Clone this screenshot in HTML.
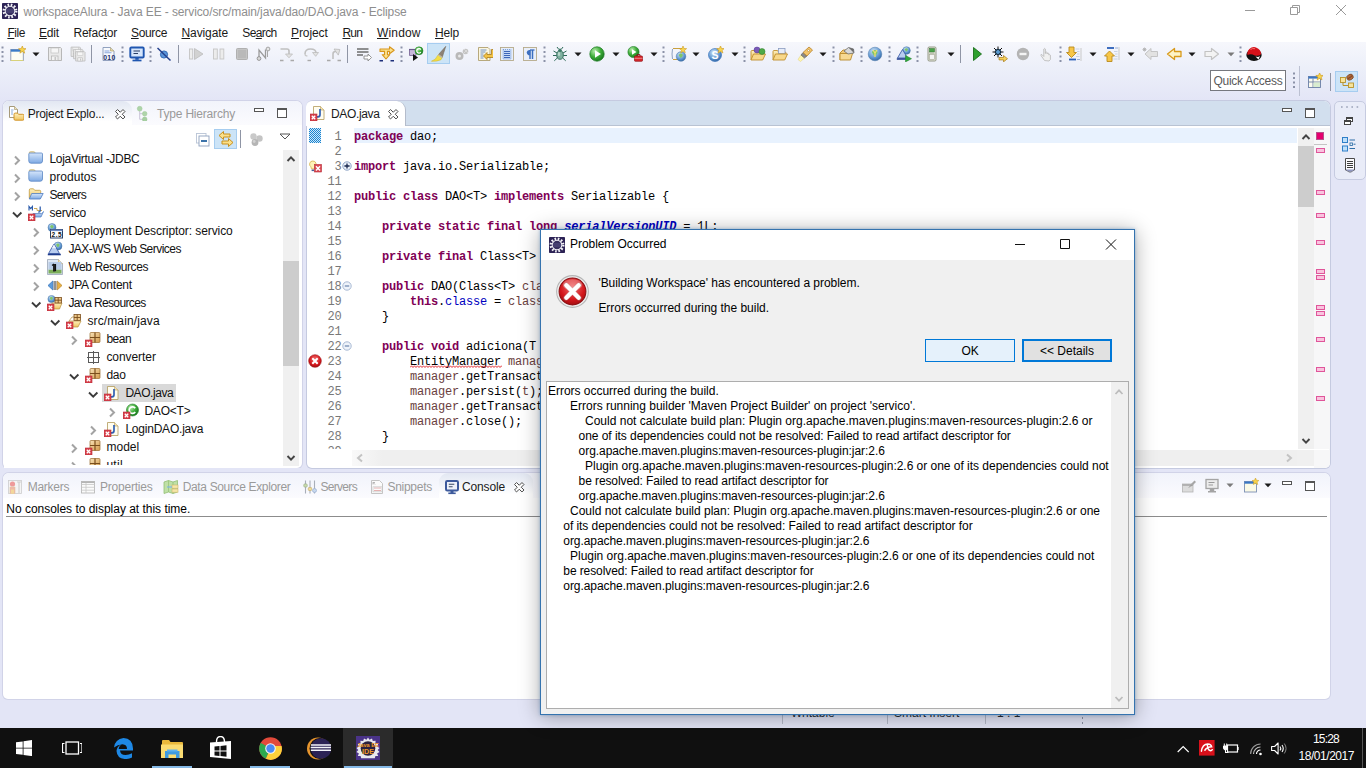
<!DOCTYPE html>
<html lang="en">
<head>
<meta charset="utf-8">
<title>workspaceAlura - Java EE - servico/src/main/java/dao/DAO.java - Eclipse</title>
<style>
html,body{margin:0;padding:0;}
body{width:1366px;height:768px;overflow:hidden;position:relative;background:#e3e5f6;font-family:"Liberation Sans",sans-serif;font-size:12px;}
#root{position:absolute;left:0;top:0;width:1366px;height:768px;overflow:hidden;}
#root div,#root span.t,#root svg{position:absolute;}
span.t{white-space:pre;}
u{text-decoration:underline;text-underline-offset:1px;}
.k{color:#7f0055;font-weight:bold;}
.f{color:#0000c0;}
.v{color:#6a3e3e;}
.sq{text-decoration:underline wavy #e02020;text-decoration-thickness:1px;text-underline-offset:2px;}
</style>
</head>
<body>
<div id="root">
<svg width="0" height="0" style="left:0;top:0"><defs>
<linearGradient id="gB" x1="0" y1="0" x2="0" y2="1"><stop offset="0" stop-color="#d6e6fb"/><stop offset="1" stop-color="#7ea9e3"/></linearGradient>
<linearGradient id="gY" x1="0" y1="0" x2="0" y2="1"><stop offset="0" stop-color="#fdf0c0"/><stop offset="1" stop-color="#f0c45e"/></linearGradient>
<linearGradient id="gP" x1="0" y1="0" x2="1" y2="1"><stop offset="0" stop-color="#f7e2b8"/><stop offset="1" stop-color="#d39a4a"/></linearGradient>
<radialGradient id="gG" cx=".35" cy=".3" r=".8"><stop offset="0" stop-color="#b8ecae"/><stop offset=".5" stop-color="#3fae3a"/><stop offset="1" stop-color="#14701a"/></radialGradient>
<radialGradient id="gE" cx=".4" cy=".3" r=".8"><stop offset="0" stop-color="#cfe4f8"/><stop offset=".6" stop-color="#5d95cf"/><stop offset="1" stop-color="#2a5a96"/></radialGradient>
<radialGradient id="gR" cx=".5" cy=".35" r=".75"><stop offset="0" stop-color="#f26d6d"/><stop offset=".6" stop-color="#d3161b"/><stop offset="1" stop-color="#8f0a0d"/></radialGradient>
<linearGradient id="gS" x1="0" y1="0" x2="0" y2="1"><stop offset="0" stop-color="#fff"/><stop offset="1" stop-color="#dcdcdc"/></linearGradient>
</defs></svg>
<div style="left:0px;top:0px;width:1366px;height:22px;background:#fff;"></div>
<div style="left:0px;top:22px;width:1366px;height:20px;background:#fff;"></div>
<div style="left:0px;top:42px;width:1366px;height:59px;background:linear-gradient(#f6f7fc 0%,#eceff9 45%,#e3e5f6 100%);"></div>
<div style="left:0px;top:698px;width:1366px;height:30px;background:#e3e5f6;"></div>
<span class="t" style='left:23.4px;top:3.90px;font-size:12px;line-height:16px;color:#8e8e8e;font-family:"Liberation Sans", sans-serif;letter-spacing:-0.107px;'>workspaceAlura - Java EE - servico/src/main/java/dao/DAO.java - Eclipse</span>
<span class="t" style='left:7.4px;top:24.50px;font-size:12px;line-height:16px;color:#1a1a1a;font-family:"Liberation Sans", sans-serif;letter-spacing:-0.440px;'><u>F</u>ile</span>
<span class="t" style='left:39px;top:24.50px;font-size:12px;line-height:16px;color:#1a1a1a;font-family:"Liberation Sans", sans-serif;letter-spacing:-0.176px;'><u>E</u>dit</span>
<span class="t" style='left:73.5px;top:24.50px;font-size:12px;line-height:16px;color:#1a1a1a;font-family:"Liberation Sans", sans-serif;letter-spacing:-0.234px;'>Refac<u>t</u>or</span>
<span class="t" style='left:131px;top:24.50px;font-size:12px;line-height:16px;color:#1a1a1a;font-family:"Liberation Sans", sans-serif;letter-spacing:-0.341px;'><u>S</u>ource</span>
<span class="t" style='left:181.5px;top:24.50px;font-size:12px;line-height:16px;color:#1a1a1a;font-family:"Liberation Sans", sans-serif;letter-spacing:-0.109px;'><u>N</u>avigate</span>
<span class="t" style='left:242.3px;top:24.50px;font-size:12px;line-height:16px;color:#1a1a1a;font-family:"Liberation Sans", sans-serif;letter-spacing:-0.624px;'>Se<u>a</u>rch</span>
<span class="t" style='left:291px;top:24.50px;font-size:12px;line-height:16px;color:#1a1a1a;font-family:"Liberation Sans", sans-serif;letter-spacing:-0.094px;'><u>P</u>roject</span>
<span class="t" style='left:342.5px;top:24.50px;font-size:12px;line-height:16px;color:#1a1a1a;font-family:"Liberation Sans", sans-serif;letter-spacing:-0.844px;'><u>R</u>un</span>
<span class="t" style='left:377px;top:24.50px;font-size:12px;line-height:16px;color:#1a1a1a;font-family:"Liberation Sans", sans-serif;letter-spacing:0.169px;'><u>W</u>indow</span>
<span class="t" style='left:435px;top:24.50px;font-size:12px;line-height:16px;color:#1a1a1a;font-family:"Liberation Sans", sans-serif;letter-spacing:-0.172px;'><u>H</u>elp</span>
<svg style="left:2px;top:2.5px;" width="16" height="16" viewBox="0 0 16 16"><rect x="0" y="0" width="16" height="16" rx=".8" fill="#2c2255"/><circle cx="8" cy="8" r="6.300" fill="none" stroke="#f4f4f8" stroke-width="2.300" stroke-dasharray="1.650 1.650"/><circle cx="8" cy="8" r="5.300" fill="#f4f4f8"/><circle cx="8" cy="8" r="4.300" fill="#37305f"/><path d="M4 6.800h8M3.800 8h8.400M4 9.200h8" stroke="#5d578c" stroke-width=".6"/></svg>
<svg style="left:1240px;top:0" width="126" height="22" viewBox="0 0 126 22"><path d="M5 10.500h10" stroke="#9a9a9a" stroke-width="1"/><path d="M50.500 7.500h7v7h-7zM52.500 7.500v-2h7v7h-2" fill="none" stroke="#9a9a9a" stroke-width="1"/><path d="M96 5l10 10M106 5l-10 10" stroke="#9a9a9a" stroke-width="1"/></svg>
<div style="left:427px;top:42.8px;width:23px;height:21.2px;background:#cce4f7;border:1px solid #a6cdf0;box-sizing:border-box;"></div>
<svg style="left:430.5px;top:46px;" width="16" height="16" viewBox="0 0 16 16"><path d="M14.800 .300l-7.300 8.200 3.800 2.700z" fill="#8d8274" stroke="#6e6256" stroke-width=".5"/><path d="M7.500 8.500l3.800 2.700-1.300 2.500q-4.500 2-9.500 1.500 4.500-1.500 5.500-4.700z" fill="#f3df45" stroke="#d6bb28" stroke-width=".6"/><path d="M7.300 8.800l4 2.800" stroke="#b9b4ac" stroke-width="1.400"/></svg>
<svg style="left:9.5px;top:46px;" width="16" height="16" viewBox="0 0 16 16"><rect x=".8" y="3.500" width="12.500" height="11" fill="#fdfdf4" stroke="#8a96b0" stroke-width=".9"/><path d="M.8 14.500h12.500" stroke="#d8d27a" stroke-width="1"/><path d="M.8 4.600h12.500" stroke="#3b7cc8" stroke-width="2.200"/><path transform="translate(12.3 3.6) scale(1.15)" d="M0-3.2l.9 2.300 2.400.100-1.900 1.500.700 2.400-2.100-1.400-2.100 1.400.700-2.400-1.900-1.500 2.400-.100z" fill="#f9d54e" stroke="#c8961c" stroke-width=".5"/></svg>
<svg style="left:27.5px;top:46px;" width="16" height="16" viewBox="0 0 16 16"><path d="M4.500 6.500h7l-3.500 3.800z" fill="#1a1a1a"/></svg>
<svg style="left:46.5px;top:46px;" width="16" height="16" viewBox="0 0 16 16"><g transform="translate(0 0) scale(1)"><path d="M1.500 1.500h12l1 1v12h-13z" fill="#e9e9e9" stroke="#b7b7b7" stroke-width="1"/><rect x="4" y="2" width="7.500" height="5" fill="#f6f6f6" stroke="#c2c2c2" stroke-width=".7"/><rect x="4.500" y="10" width="6.500" height="4.500" fill="#f3f3f3" stroke="#b7b7b7" stroke-width=".8"/><rect x="7.500" y="11" width="1.600" height="3" fill="#c6c6c6"/></g></svg>
<svg style="left:69.5px;top:46px;" width="16" height="16" viewBox="0 0 16 16"><g transform="translate(0 0) scale(0.72)"><path d="M1.500 1.500h12l1 1v12h-13z" fill="#e9e9e9" stroke="#b7b7b7" stroke-width="1"/><rect x="4" y="2" width="7.500" height="5" fill="#f6f6f6" stroke="#c2c2c2" stroke-width=".7"/><rect x="4.500" y="10" width="6.500" height="4.500" fill="#f3f3f3" stroke="#b7b7b7" stroke-width=".8"/><rect x="7.500" y="11" width="1.600" height="3" fill="#c6c6c6"/></g><g transform="translate(2.5 2.3) scale(0.72)"><path d="M1.500 1.500h12l1 1v12h-13z" fill="#e9e9e9" stroke="#b7b7b7" stroke-width="1"/><rect x="4" y="2" width="7.500" height="5" fill="#f6f6f6" stroke="#c2c2c2" stroke-width=".7"/><rect x="4.500" y="10" width="6.500" height="4.500" fill="#f3f3f3" stroke="#b7b7b7" stroke-width=".8"/><rect x="7.500" y="11" width="1.600" height="3" fill="#c6c6c6"/></g><g transform="translate(4.6 4.6) scale(0.72)"><path d="M1.500 1.500h12l1 1v12h-13z" fill="#e9e9e9" stroke="#b7b7b7" stroke-width="1"/><rect x="4" y="2" width="7.500" height="5" fill="#f6f6f6" stroke="#c2c2c2" stroke-width=".7"/><rect x="4.500" y="10" width="6.500" height="4.500" fill="#f3f3f3" stroke="#b7b7b7" stroke-width=".8"/><rect x="7.500" y="11" width="1.600" height="3" fill="#c6c6c6"/></g></svg>
<svg style="left:100.5px;top:46px;" width="16" height="16" viewBox="0 0 16 16"><path d="M2 1.500h7.500l3.500 3.500v9.500h-11z" fill="#f7f9fd" stroke="#8797b8" stroke-width=".9"/><path d="M9.500 1.500v3.500h3.500" fill="#e8d9a4" stroke="#a89a6a" stroke-width=".6"/><path d="M3.500 5h5M3.500 6.800h7" stroke="#8aa6dc" stroke-width="1.100"/><text x="2.200" y="13.600" font-family="Liberation Sans,sans-serif" font-weight="bold" font-size="6.800" fill="#1d2f6a" textLength="12">010</text></svg>
<svg style="left:128.5px;top:46px;" width="16" height="16" viewBox="0 0 16 16"><rect x="1.300" y="1.500" width="13.400" height="10" rx="1" fill="#d6e6fb" stroke="#1f56b0" stroke-width="1.900"/><path d="M4.500 5h6.500M4.500 7.500h4.500" stroke="#2a3f66" stroke-width="1.100"/><path d="M6.300 12h3.400v1.800h-3.400z" fill="#1f56b0"/><path d="M3.500 14.500h9" stroke="#1f56b0" stroke-width="1.700"/></svg>
<svg style="left:155.5px;top:46px;" width="16" height="16" viewBox="0 0 16 16"><circle cx="8" cy="8.500" r="3.600" fill="#5a95da" stroke="#2b62b0" stroke-width=".9"/><path d="M1.500 2l13 12.500" stroke="#25408c" stroke-width="1.500"/></svg>
<svg style="left:187.5px;top:46px;" width="16" height="16" viewBox="0 0 16 16"><rect x="1.500" y="3" width="3.200" height="10" fill="#eee" stroke="#c4c4c4" stroke-width=".9"/><path d="M6.500 2.500l8.500 5.500-8.500 5.500z" fill="#d2d2d2" stroke="#bdbdbd" stroke-width=".8"/></svg>
<svg style="left:210.5px;top:46px;" width="16" height="16" viewBox="0 0 16 16"><rect x="2.500" y="3" width="3.800" height="10" fill="#ececec" stroke="#c6c6c6" stroke-width=".9"/><rect x="9" y="3" width="3.800" height="10" fill="#ececec" stroke="#c6c6c6" stroke-width=".9"/></svg>
<svg style="left:233.5px;top:46px;" width="16" height="16" viewBox="0 0 16 16"><rect x="2.500" y="2.500" width="11" height="11" rx="1" fill="#c4c4c4" stroke="#b0b0b0" stroke-width="1"/><rect x="4" y="4" width="8" height="8" fill="#b9b9b9"/></svg>
<svg style="left:256px;top:46px;" width="16" height="16" viewBox="0 0 16 16"><path d="M3 12v-8l6.500 8v-8.500" fill="none" stroke="#9b9b9b" stroke-width="1.300"/><circle cx="3" cy="12.500" r="1.900" fill="#d9d9d9" stroke="#8f8f8f" stroke-width=".9"/><circle cx="12" cy="3" r="1.900" fill="#e5e5e5" stroke="#9d9d9d" stroke-width=".9"/><path d="M11.500 5v6" stroke="#a8a8a8" stroke-width="1"/></svg>
<svg style="left:279px;top:46px;" width="16" height="16" viewBox="0 0 16 16"><path d="M1.500 3h6.500q2 0 2 2v3" fill="none" stroke="#c0c0c0" stroke-width="1.600"/><path d="M6.500 8h7l-3.500 3.800z" fill="#e3e3e3" stroke="#bcbcbc" stroke-width=".8"/><path d="M1 14.500h3.500M11.500 14.500h3.500" stroke="#a9a9a9" stroke-width="1.400"/></svg>
<svg style="left:302.5px;top:46px;" width="16" height="16" viewBox="0 0 16 16"><path d="M2 8q0-5 5.500-5t5.500 4" fill="none" stroke="#c0c0c0" stroke-width="1.600"/><path d="M9.500 6.500h6l-2.800 3.800z" fill="#e3e3e3" stroke="#bcbcbc" stroke-width=".8"/><path d="M2 8q0 2 2.500 2" fill="none" stroke="#c8c8c8" stroke-width="1.200"/><path d="M4.500 14.500h3.500" stroke="#a9a9a9" stroke-width="1.400"/></svg>
<svg style="left:325.5px;top:46px;" width="16" height="16" viewBox="0 0 16 16"><path d="M7 13v-5q0-2.500 2.500-2.500h1" fill="none" stroke="#c0c0c0" stroke-width="1.600"/><path d="M10 1.800l4.500 3.700-4.500 3.700z" fill="#e3e3e3" stroke="#bcbcbc" stroke-width=".8" transform="rotate(-35 11 5.500)"/><path d="M1 14.500h3.500M11.500 14.500h3.500" stroke="#a9a9a9" stroke-width="1.400"/></svg>
<svg style="left:355.5px;top:46px;" width="16" height="16" viewBox="0 0 16 16"><path d="M1 3h11.500M1 6h11.500M1 9h6" stroke="#6e6e6e" stroke-width="1.500"/><path d="M8 10h4v-2l3.500 3.500-3.500 3.500v-2h-4z" fill="#fff" stroke="#8a8a8a" stroke-width=".9"/></svg>
<svg style="left:379px;top:46px;" width="16" height="16" viewBox="0 0 16 16"><path d="M1 3h9.500v-2.300l4.700 3.500-4.700 3.500v-2.300h-2v3.300h2.300l-3.800 4.300-3.800-4.300h2.300v-3.300h-4.500z" fill="#fbe08a" stroke="#d8961c" stroke-width="1.100" stroke-linejoin="round"/><path d="M.500 14.800h3.500M11.500 14.800h3.500" stroke="#1c2f7a" stroke-width="1.600"/></svg>
<svg style="left:408px;top:46px;" width="16" height="16" viewBox="0 0 16 16"><path d="M1.500 3.500h6.500v6h-6.500z" fill="#c8b8dc" stroke="#7d6a9a" stroke-width=".9"/><path d="M1 3.500h7.500" stroke="#6a5a8a" stroke-width="1.200"/><path d="M5 8v7l5-3.600z" fill="#111"/><circle cx="11" cy="4.800" r="4" fill="url(#gG)" stroke="#1d7a22" stroke-width=".5"/><path d="M12.800 3.600a2.200 2.200 0 1 0 0 2.500" fill="none" stroke="#fff" stroke-width="1.200"/></svg>
<svg style="left:453.5px;top:46px;" width="16" height="16" viewBox="0 0 16 16"><circle cx="5.500" cy="10" r="4" fill="#b9b9b9"/><circle cx="5.500" cy="10" r="1.500" fill="#e8e8e8"/><circle cx="11.500" cy="5.500" r="2.800" fill="#c4c4c4"/><path d="M10 3l4 4M14 3l-4 4" stroke="#d9d9d9" stroke-width="1"/></svg>
<svg style="left:476.5px;top:46px;" width="16" height="16" viewBox="0 0 16 16"><path d="M1.500 1.500h9.500l2 2v11h-11.500z" fill="#fbf6df" stroke="#b0a070" stroke-width=".9"/><path d="M3.500 4h6M3.500 6h5M3.500 8h3M3.500 10h3M3.500 12h3" stroke="#5f86c8" stroke-width=".9"/><path d="M14.500 3.500v5h-4.500v-2l-3.500 3.500 3.500 3.500v-2h7.500v-8z" fill="#f3c243" stroke="#a87b18" stroke-width=".8" stroke-linejoin="round"/></svg>
<svg style="left:499px;top:46px;" width="16" height="16" viewBox="0 0 16 16"><rect x="1.500" y="1.500" width="13" height="13" fill="#e6eefb" stroke="#b6aa8a" stroke-width=".9"/><rect x="4" y="3.500" width="8" height="9.500" fill="#c5d9f6" stroke="#5d86c8" stroke-width=".7" stroke-dasharray="1 1"/><path d="M5 5.500h6M5 7.500h6M5 9.500h6M5 11.500h6" stroke="#3d66b8" stroke-width="1"/></svg>
<svg style="left:522px;top:46px;" width="16" height="16" viewBox="0 0 16 16"><rect x="1.500" y="1.500" width="13" height="13" fill="#e9effa" stroke="#b6aa8a" stroke-width=".9"/><path d="M10.500 4v9M8 4v9" stroke="#3c6fc0" stroke-width="1.500"/><path d="M8 4h4.500" stroke="#3c6fc0" stroke-width="1.300"/><path d="M8.200 4a2.700 2.700 0 1 0 0 5.200z" fill="#3c6fc0"/></svg>
<svg style="left:551.5px;top:46px;" width="16" height="16" viewBox="0 0 16 16"><ellipse cx="8" cy="9" rx="3.300" ry="4.300" fill="#7fb0a0" stroke="#2e6a58" stroke-width=".9"/><circle cx="8" cy="4.300" r="1.700" fill="#3f7a68"/><path d="M5 7l-3.500-2M11 7l3.500-2M4.700 9.500h-3.700M11.300 9.500h3.700M5.300 12l-3 2.800M10.700 12l3 2.800M6.500 3l-1.500-2M9.500 3l1.500-2" stroke="#2e6a58" stroke-width="1"/><ellipse cx="7" cy="8" rx="1.200" ry="2" fill="#c5e2d6" opacity=".8"/></svg>
<svg style="left:569.5px;top:46px;" width="16" height="16" viewBox="0 0 16 16"><path d="M4.500 6.500h7l-3.500 3.800z" fill="#1a1a1a"/></svg>
<svg style="left:589px;top:46px;" width="16" height="16" viewBox="0 0 16 16"><circle cx="8" cy="8" r="7.200" fill="url(#gG)" stroke="#1b7a22" stroke-width=".7"/><path d="M6 4.200l6 3.800-6 3.800z" fill="#fff"/></svg>
<svg style="left:607.5px;top:46px;" width="16" height="16" viewBox="0 0 16 16"><path d="M4.500 6.500h7l-3.500 3.800z" fill="#1a1a1a"/></svg>
<svg style="left:627px;top:46px;" width="16" height="16" viewBox="0 0 16 16"><circle cx="6.500" cy="6" r="5.600" fill="url(#gG)" stroke="#1b7a22" stroke-width=".6"/><path d="M5 3.200l4.500 2.800-4.500 2.800z" fill="#fff"/><rect x="7.500" y="10" width="8" height="5.300" rx=".8" fill="#d8262c" stroke="#8f1216" stroke-width=".7"/><path d="M10 10v-1.300h3v1.300" fill="none" stroke="#8f1216" stroke-width="1"/><path d="M7.500 12.300h8" stroke="#f3a0a0" stroke-width=".8"/></svg>
<svg style="left:645.5px;top:46px;" width="16" height="16" viewBox="0 0 16 16"><path d="M4.500 6.500h7l-3.500 3.800z" fill="#1a1a1a"/></svg>
<svg style="left:671px;top:46px;" width="16" height="16" viewBox="0 0 16 16"><path d="M2 2.500h10M2 13.500h6" stroke="#c8a040" stroke-width="1.200"/><path d="M1.500 3q-1 5 0 10" fill="none" stroke="#8ea0c0" stroke-width="1"/><circle cx="10" cy="10.5" r="4.8" fill="url(#gE)" stroke="#4a78a8" stroke-width=".5"/><path d="M7.6 9.06q2.4 -2.88 4.32 0q-0.96 3.36 -2.88 2.4z" fill="#7fc66a"/><path transform="translate(12 3.5) scale(1.1)" d="M0-3.2l.9 2.300 2.400.100-1.900 1.500.700 2.400-2.100-1.400-2.100 1.400.700-2.400-1.900-1.500 2.400-.100z" fill="#f9d54e" stroke="#c8961c" stroke-width=".5"/></svg>
<svg style="left:688px;top:46px;" width="16" height="16" viewBox="0 0 16 16"><path d="M4.500 6.500h7l-3.500 3.800z" fill="#1a1a1a"/></svg>
<svg style="left:708px;top:46px;" width="16" height="16" viewBox="0 0 16 16"><circle cx="7" cy="9" r="6.500" fill="url(#gE)" stroke="#2a6ab8" stroke-width=".6"/><text x="3.600" y="13" font-family="Liberation Sans,sans-serif" font-weight="bold" font-size="10.500" fill="#fff">S</text><path transform="translate(12.5 3.5) scale(1.15)" d="M0-3.2l.9 2.300 2.400.100-1.900 1.500.700 2.400-2.100-1.400-2.100 1.400.700-2.400-1.900-1.500 2.400-.100z" fill="#f9d54e" stroke="#c8961c" stroke-width=".5"/></svg>
<svg style="left:726.5px;top:46px;" width="16" height="16" viewBox="0 0 16 16"><path d="M4.500 6.500h7l-3.500 3.800z" fill="#1a1a1a"/></svg>
<svg style="left:750px;top:46px;" width="16" height="16" viewBox="0 0 16 16"><path d="M1 14v-8.500q0-1 1-1h3.500l1 1.500h6.500q1 0 1 1v1" fill="url(#gY)" stroke="#c08f2c" stroke-width=".9"/><path d="M1 14l2.500-6h12l-2.800 6z" fill="#f8d88a" stroke="#c08f2c" stroke-width=".9"/><circle cx="7" cy="4" r="3" fill="#7a5ab8" stroke="#4e3590" stroke-width=".5"/><circle cx="12" cy="5.500" r="3" fill="#4faa48" stroke="#2a7a28" stroke-width=".5"/></svg>
<svg style="left:772px;top:46px;" width="16" height="16" viewBox="0 0 16 16"><path d="M1 14v-8.500q0-1 1-1h3.500l1 1.500h6.500q1 0 1 1v1" fill="url(#gY)" stroke="#c08f2c" stroke-width=".9"/><rect x="6.500" y="2.500" width="6.500" height="5" fill="#e6ecf8" stroke="#8a9cc0" stroke-width=".8"/><path d="M1 14l2.500-6h12l-2.800 6z" fill="#f8d88a" stroke="#c08f2c" stroke-width=".9"/></svg>
<svg style="left:797px;top:46px;" width="16" height="16" viewBox="0 0 16 16"><path d="M1 13.500l3-4.500 3.500 3-4 3.500z" fill="#fff5b0" stroke="#e0d070" stroke-width=".5"/><path d="M4 9l2-2.500 4 3.500-2.500 2z" fill="#8a8a8a" stroke="#5a5a5a" stroke-width=".6"/><path d="M6 6.500l6-5.500 3.500 3-5.500 6z" fill="#f3c46a" stroke="#b8832a" stroke-width=".8"/><circle cx="11.500" cy="4.500" r="1" fill="#fff" stroke="#a87820" stroke-width=".5"/></svg>
<svg style="left:815.3px;top:46px;" width="16" height="16" viewBox="0 0 16 16"><path d="M4.500 6.500h7l-3.500 3.800z" fill="#1a1a1a"/></svg>
<svg style="left:838.5px;top:46px;" width="16" height="16" viewBox="0 0 16 16"><path d="M1 14v-7l3-3h6l-2 3.500" fill="#f1c978" stroke="#b98a2a" stroke-width=".9"/><path d="M1 14v-6.500h7.500l5.500-1.500-2.500 8z" fill="#f7d992" stroke="#b98a2a" stroke-width=".9"/><path d="M5 5l4.500-3.500 5 1.500 .500 4-6 1z" fill="#d9d9d9" stroke="#6e6e6e" stroke-width=".8"/><path d="M9.500 1.500l5 1.500.5 4z" fill="#6a6a6a"/></svg>
<svg style="left:867.3px;top:46px;" width="16" height="16" viewBox="0 0 16 16"><circle cx="8" cy="8" r="6.8" fill="url(#gE)" stroke="#4a78a8" stroke-width=".5"/><path d="M4.6 5.96q3.4 -4.08 6.12 0q-1.36 4.76 -4.08 3.4z" fill="#7fc66a"/><path d="M6 4l2 3 2-3M8 7v4" stroke="#f2e070" stroke-width="1.200" fill="none"/></svg>
<svg style="left:895.5px;top:46px;" width="16" height="16" viewBox="0 0 16 16"><circle cx="10.5" cy="4.5" r="3.8" fill="url(#gE)" stroke="#4a78a8" stroke-width=".5"/><path d="M8.6 3.3600000000000003q1.9 -2.28 3.42 0q-0.76 2.6599999999999997 -2.28 1.9z" fill="#7fc66a"/><path d="M6.500 3.500l5 8.500h-10z" fill="#b8cdf0" stroke="#3050a0" stroke-width=".8"/><path d="M.8 13h9" stroke="#1c3a8c" stroke-width="1.500"/><path d="M9.500 9.500l6 3.200-6 3.200z" fill="#2fa83a" stroke="#167a22" stroke-width=".5"/></svg>
<svg style="left:923.8px;top:46px;" width="16" height="16" viewBox="0 0 16 16"><rect x="4" y="1" width="8" height="14" rx="1.200" fill="#e6e8dc" stroke="#8a8f7a" stroke-width=".9"/><rect x="5.500" y="2.500" width="5" height="3.500" fill="#4aa24a" stroke="#2e6e2e" stroke-width=".5"/><rect x="5.500" y="8.500" width="5" height="5" fill="#f4f4f4" stroke="#a0a490" stroke-width=".6"/><path d="M5.500 7.200h5" stroke="#a0a490" stroke-width=".8"/></svg>
<svg style="left:942.5px;top:46px;" width="16" height="16" viewBox="0 0 16 16"><path d="M4.500 6.500h7l-3.500 3.800z" fill="#1a1a1a"/></svg>
<svg style="left:969px;top:46px;" width="16" height="16" viewBox="0 0 16 16"><path d="M4.500 1.500l8 6.500-8 6.500z" fill="#2fa02f" stroke="#1a6e1a" stroke-width=".9" stroke-linejoin="round"/></svg>
<svg style="left:992px;top:46px;" width="16" height="16" viewBox="0 0 16 16"><circle cx="6" cy="6" r="2.800" fill="#3a7ab0" stroke="#123a5a" stroke-width=".9"/><path d="M6 .5v11M.5 6h11M2 2l8 8M10 2l-8 8" stroke="#111" stroke-width="1"/><circle cx="6" cy="6" r="2" fill="#5a9ad0"/><path d="M7 11.500h4.500v-2l4 3.200-4 3.200v-2h-4.500z" fill="#f5cf5a" stroke="#a87b18" stroke-width=".7" stroke-linejoin="round"/></svg>
<svg style="left:1015px;top:46px;" width="16" height="16" viewBox="0 0 16 16"><circle cx="8" cy="8" r="6.200" fill="#b4b4b4"/><rect x="4.500" y="6.800" width="7" height="2.400" fill="#f4f4f4"/></svg>
<svg style="left:1038.5px;top:46px;" width="16" height="16" viewBox="0 0 16 16"><path d="M5.500 14.500l-3.500-5q-.500-1.200.800-1l2 2v-7.500q.800-1.200 1.600 0v4.500-1q.900-1 1.700 0v1.500-.500q.900-1 1.700 0v1.500q.900-.800 1.600.200v4.300l-1.400 1.500z" fill="#f0f0f0" stroke="#bcbcbc" stroke-width=".9" stroke-linejoin="round"/></svg>
<svg style="left:1066px;top:46px;" width="16" height="16" viewBox="0 0 16 16"><path d="M3 1h5v5.500h2.500l-5 5-5-5h2.500z" fill="#f7c648" stroke="#b98a1e" stroke-width=".9" stroke-linejoin="round"/><path d="M15 2v13" stroke="#c9c9c9" stroke-width="1"/><path d="M9.500 3h4M11 5.500h2.500M11 8h2.500M10 10.500h3.500" stroke="#c5cfe2" stroke-width=".9"/><path d="M3 13.500h7" stroke="#2b5fb8" stroke-width="1.800"/><path d="M11 13.500h3" stroke="#9ab0d8" stroke-width="1"/></svg>
<svg style="left:1085px;top:46px;" width="16" height="16" viewBox="0 0 16 16"><path d="M4.500 6.500h7l-3.500 3.800z" fill="#1a1a1a"/></svg>
<svg style="left:1104px;top:46px;" width="16" height="16" viewBox="0 0 16 16"><path d="M3 15.500h5v-5.500h2.500l-5-5-5 5h2.500z" fill="#f7c648" stroke="#b98a1e" stroke-width=".9" stroke-linejoin="round"/><path d="M15 1v13" stroke="#c9c9c9" stroke-width="1"/><path d="M10 5.500h3.500M11 8h2.500M11 10.500h2.500M9.500 13h4" stroke="#c5cfe2" stroke-width=".9"/><path d="M3 2h7" stroke="#2b5fb8" stroke-width="1.800"/><path d="M11 2h3" stroke="#9ab0d8" stroke-width="1"/></svg>
<svg style="left:1123.3px;top:46px;" width="16" height="16" viewBox="0 0 16 16"><path d="M4.500 6.500h7l-3.500 3.800z" fill="#1a1a1a"/></svg>
<svg style="left:1142px;top:46px;" width="16" height="16" viewBox="0 0 16 16"><path d="M15.500 5.500v5h-6.500v3l-6-5.500 6-5.500v3z" fill="#e2e2e2" stroke="#c0c0c0" stroke-width=".9" stroke-linejoin="round"/><path d="M1 2l3 3M4 2l-3 3M2.500 1.500v4M.5 3.500h4" stroke="#b0b0b0" stroke-width=".8"/></svg>
<svg style="left:1166px;top:46px;" width="16" height="16" viewBox="0 0 16 16"><path d="M15 5.500v5h-6.500v3l-7-5.500 7-5.500v3z" fill="#fdf3c6" stroke="#d89a1a" stroke-width="1.300" stroke-linejoin="round"/></svg>
<svg style="left:1184.3px;top:46px;" width="16" height="16" viewBox="0 0 16 16"><path d="M4.500 6.500h7l-3.500 3.800z" fill="#1a1a1a"/></svg>
<svg style="left:1204px;top:46px;" width="16" height="16" viewBox="0 0 16 16"><path d="M1 5.500v5h6.500v3l7-5.500-7-5.500v3z" fill="#f3f3f3" stroke="#c3c3c3" stroke-width="1.200" stroke-linejoin="round"/></svg>
<svg style="left:1222.5px;top:46px;" width="16" height="16" viewBox="0 0 16 16"><path d="M4.500 6.500h7l-3.500 3.800z" fill="#7a7a7a"/></svg>
<svg style="left:1245.5px;top:46px;" width="16" height="16" viewBox="0 0 16 16"><ellipse cx="8" cy="9" rx="7.700" ry="6" fill="#111"/><path d="M1.500 9q-1-5 4-7.500 3-1 5 .3 4 1.400 4.700 6.200-2.500 2.800-6.500 1.400-3.800-2-7.200-.4z" fill="#d5121a"/><path d="M4.500 3.500q2-1.500 4.500-.8" stroke="#f26d6d" stroke-width="1" fill="none"/><path d="M9.500 10.500q2.500 1.200 4.500-.5l-1.500 3.500z" fill="#fff"/></svg>
<svg style="left:0px;top:45px;" width="17" height="17" viewBox="0 0 16 17"><path d="M2 1.500v15.500" stroke="#8b92a8" stroke-width="2" stroke-dasharray="2 2.500"/></svg>
<svg style="left:120px;top:45px;" width="17" height="17" viewBox="0 0 16 17"><path d="M2 1.500v15.500" stroke="#8b92a8" stroke-width="2" stroke-dasharray="2 2.500"/></svg>
<svg style="left:148px;top:45px;" width="17" height="17" viewBox="0 0 16 17"><path d="M2 1.500v15.500" stroke="#8b92a8" stroke-width="2" stroke-dasharray="2 2.500"/></svg>
<svg style="left:399.2px;top:45px;" width="17" height="17" viewBox="0 0 16 17"><path d="M2 1.500v15.500" stroke="#8b92a8" stroke-width="2" stroke-dasharray="2 2.500"/></svg>
<svg style="left:542px;top:45px;" width="17" height="17" viewBox="0 0 16 17"><path d="M2 1.500v15.500" stroke="#8b92a8" stroke-width="2" stroke-dasharray="2 2.500"/></svg>
<svg style="left:661px;top:45px;" width="17" height="17" viewBox="0 0 16 17"><path d="M2 1.500v15.500" stroke="#8b92a8" stroke-width="2" stroke-dasharray="2 2.500"/></svg>
<svg style="left:742px;top:45px;" width="17" height="17" viewBox="0 0 16 17"><path d="M2 1.500v15.500" stroke="#8b92a8" stroke-width="2" stroke-dasharray="2 2.500"/></svg>
<svg style="left:830.8px;top:45px;" width="17" height="17" viewBox="0 0 16 17"><path d="M2 1.500v15.500" stroke="#8b92a8" stroke-width="2" stroke-dasharray="2 2.500"/></svg>
<svg style="left:859px;top:45px;" width="17" height="17" viewBox="0 0 16 17"><path d="M2 1.500v15.500" stroke="#8b92a8" stroke-width="2" stroke-dasharray="2 2.500"/></svg>
<svg style="left:887px;top:45px;" width="17" height="17" viewBox="0 0 16 17"><path d="M2 1.500v15.500" stroke="#8b92a8" stroke-width="2" stroke-dasharray="2 2.500"/></svg>
<svg style="left:914.5px;top:45px;" width="17" height="17" viewBox="0 0 16 17"><path d="M2 1.500v15.500" stroke="#8b92a8" stroke-width="2" stroke-dasharray="2 2.500"/></svg>
<svg style="left:1058px;top:45px;" width="17" height="17" viewBox="0 0 16 17"><path d="M2 1.500v15.500" stroke="#8b92a8" stroke-width="2" stroke-dasharray="2 2.500"/></svg>
<svg style="left:1238px;top:45px;" width="17" height="17" viewBox="0 0 16 17"><path d="M2 1.500v15.500" stroke="#8b92a8" stroke-width="2" stroke-dasharray="2 2.500"/></svg>
<div style="left:91px;top:45px;width:1px;height:18px;background:#8f95a5;"></div>
<div style="left:178px;top:45px;width:1px;height:18px;background:#8f95a5;"></div>
<div style="left:347px;top:45px;width:1px;height:18px;background:#8f95a5;"></div>
<div style="left:960px;top:45px;width:1px;height:18px;background:#8f95a5;"></div>
<div style="left:1210px;top:70px;width:76px;height:21px;background:#fff;border:1px solid #76787e;box-sizing:border-box;"></div>
<span class="t" style='left:1213.4px;top:72.50px;font-size:12px;line-height:16px;color:#5a5a5a;font-family:"Liberation Sans", sans-serif;letter-spacing:-0.244px;'>Quick Access</span>
<svg style="left:1291.3px;top:70.5px;" width="18" height="18" viewBox="0 0 16 18"><path d="M2 1.500v15.500" stroke="#8b92a8" stroke-width="2" stroke-dasharray="2 2.500"/></svg>
<div style="left:1298.5px;top:66px;width:1px;height:30px;background:#bcc1d2;"></div>
<svg style="left:1307px;top:73px;" width="16" height="16" viewBox="0 0 16 16"><rect x="1.500" y="3.500" width="12" height="11" fill="#fbfbf0" stroke="#6b7fa6" stroke-width=".9"/><path d="M1.500 4.600h12" stroke="#3a76c4" stroke-width="2"/><path d="M1.500 9h12M6 5.500v9" stroke="#6b7fa6" stroke-width=".9"/><rect x="6.500" y="9.500" width="6.500" height="4.500" fill="#d8ecd0"/><path transform="translate(12.6 3.4) scale(1.15)" d="M0-3.2l.9 2.300 2.400.100-1.900 1.500.700 2.400-2.100-1.400-2.100 1.400.700-2.400-1.900-1.500 2.400-.100z" fill="#f9d54e" stroke="#c8961c" stroke-width=".5"/></svg>
<div style="left:1329.5px;top:73px;width:1px;height:18px;background:#8f95a5;"></div>
<div style="left:1335px;top:71px;width:22.5px;height:20.5px;background:#cce4f7;border:1px solid #a6cdf0;box-sizing:border-box;"></div>
<svg style="left:1339px;top:73px;" width="16" height="16" viewBox="0 0 16 16"><rect x="1.500" y="4.500" width="5" height="5" fill="#f6e39a" stroke="#b8922a" stroke-width=".9"/><rect x="9.500" y="10" width="5" height="4.500" fill="#f6e39a" stroke="#b8922a" stroke-width=".9"/><path d="M4 9.500v3h5.500" fill="none" stroke="#b8922a" stroke-width="1"/><ellipse cx="11" cy="4.200" rx="3.400" ry="2.800" fill="#b0683a" stroke="#6a3a1c" stroke-width=".6" transform="rotate(-30 11 4.200)"/><path d="M9 5.500q2-.5 4-2.800" stroke="#5a2e14" stroke-width=".7" fill="none"/></svg>
<div style="left:3px;top:101px;width:299px;height:367px;background:#fff;border-radius:6px 6px 5px 5px;box-shadow:0 0 0 1px rgba(160,166,196,.28);"></div>
<div style="left:3px;top:101px;width:299px;height:24px;background:linear-gradient(#f2f4fb,#fbfbfe);border-radius:6px 6px 0 0;"></div>
<div style="left:3px;top:101px;width:129px;height:24px;background:linear-gradient(#e2e7f2,#fff 85%);border-radius:6px 9px 0 0;"></div>
<span class="t" style='left:27.7px;top:105.80px;font-size:12px;line-height:16px;color:#1a1a1a;font-family:"Liberation Sans", sans-serif;letter-spacing:-0.250px;'>Project Explo...</span>
<svg style="left:8px;top:105px;" width="16" height="16" viewBox="0 0 16 16"><path d="M1.500 1.500h5l3 3v8h-8z" fill="#fff" stroke="#9c8f6a" stroke-width=".9"/><path d="M6.500 1.500v3h3" fill="#efe3b8" stroke="#9c8f6a" stroke-width=".6"/><path d="M3 5h2.500M3 7h2M3 9h2" stroke="#7aa0d8" stroke-width=".9"/><path d="M6 9.300q0-1.200 1.200-1.200h2.300l1 1.200h4.300q1.200 0 1.200 1.200v3.500q0 1.200-1.200 1.200h-7.600q-1.200 0-1.200-1.200z" fill="url(#gY)" stroke="#d2952a" stroke-width="1"/></svg>
<svg style="left:112.85px;top:106.75px;" width="14.5" height="14.5" viewBox="0 0 16 16"><path d="M2.800 5L5 2.800 8 5.800 11 2.800 13.200 5 10.200 8 13.200 11 11 13.200 8 10.200 5 13.200 2.800 11 5.800 8Z" fill="#fff" stroke="#4a4a4a" stroke-width="1.100" stroke-linejoin="round"/></svg>
<svg style="left:135px;top:105px;" width="16" height="16" viewBox="0 0 16 16"><path d="M4.700 5v9.300h3M4.700 8.700h3" fill="none" stroke="#c9c4d8" stroke-width="1"/><circle cx="4.700" cy="3.700" r="2.400" fill="#aed4a9" stroke="#9ac795" stroke-width=".5"/><circle cx="9.700" cy="8.700" r="2.300" fill="#aed4a9" stroke="#9ac795" stroke-width=".5"/><circle cx="9.700" cy="14.300" r="2.300" fill="#a6cfa1" stroke="#93c08f" stroke-width=".5"/></svg>
<svg style="left:251px;top:104px;" width="16" height="16" viewBox="0 0 16 16"><rect x="3.500" y="4.500" width="9" height="3" fill="#fff" stroke="#555" stroke-width="1"/></svg>
<svg style="left:274px;top:104px;" width="16" height="16" viewBox="0 0 16 16"><rect x="3.500" y="4.500" width="9" height="9" fill="#fff" stroke="#555" stroke-width="1"/><path d="M3.500 5.500h9" stroke="#555" stroke-width="1"/></svg>
<span class="t" style='left:157px;top:105.80px;font-size:12px;line-height:16px;color:#9a9a9a;font-family:"Liberation Sans", sans-serif;letter-spacing:-0.193px;'>Type Hierarchy</span>
<div style="left:283px;top:150px;width:16px;height:316px;background:#f0f0f0;"></div>
<div style="left:283px;top:261px;width:16px;height:105px;background:#cdcdcd;"></div>
<div style="left:214px;top:128.5px;width:23px;height:20.5px;background:#cce4f7;border:1px solid #a6cdf0;box-sizing:border-box;"></div>
<svg style="left:195.5px;top:131.5px;" width="16" height="16" viewBox="0 0 16 16"><rect x=".5" y="1.5" width="9.5" height="9.5" fill="#fff" stroke="#b9c4d6" stroke-width=".9"/><rect x="3" y="4" width="10" height="10" fill="#fff" stroke="#8ea0bd" stroke-width=".9"/><path d="M5 9h6" stroke="#1b5b9b" stroke-width="1.7"/></svg>
<svg style="left:218px;top:131px;" width="16" height="16" viewBox="0 0 16 16"><path d="M1 4.500l4.500-4v2.500h6.500v3h-6.500v2.500z" fill="#fbe08a" stroke="#c8901c" stroke-width="1" stroke-linejoin="round"/><path d="M15 11.500l-4.500-4v2.500h-6.500v3h6.500v2.500z" fill="#fbe08a" stroke="#c8901c" stroke-width="1" stroke-linejoin="round"/></svg>
<div style="left:239.5px;top:130px;width:1px;height:18px;background:#8f95a5;"></div>
<svg style="left:249px;top:131.5px;" width="16" height="16" viewBox="0 0 16 16"><circle cx="4.5" cy="4.5" r="3.2" fill="#c9c9c9"/><circle cx="10.5" cy="6.5" r="3.2" fill="#c4c4c4"/><circle cx="6" cy="10.5" r="3.4" fill="#b5b5b5"/><circle cx="5.2" cy="9.5" r="1.4" fill="#d2d2d2"/></svg>
<svg style="left:277px;top:129px;" width="16" height="16" viewBox="0 0 16 16"><path d="M3 5h10l-5 5z" fill="#fff" stroke="#555" stroke-width="1" stroke-linejoin="round"/></svg>
<svg style="left:283px;top:151px;" width="16" height="16" viewBox="0 0 16 16"><path d="M4.5 10l3.5-3.7 3.5 3.7" fill="none" stroke="#444" stroke-width="1.9"/></svg>
<svg style="left:283px;top:449.5px;" width="16" height="16" viewBox="0 0 16 16"><path d="M4.5 6l3.5 3.7 3.5-3.7" fill="none" stroke="#444" stroke-width="1.9"/></svg>
<div style="left:102px;top:384px;width:74px;height:18px;background:#d9d9d9;"></div>
<span class="t" style='left:49.4px;top:151.00px;font-size:12px;line-height:16px;color:#111;font-family:"Liberation Sans", sans-serif;letter-spacing:-0.297px;'>LojaVirtual -JDBC</span>
<svg style="left:28px;top:151px;" width="16" height="16" viewBox="0 0 16 16"><path d="M1.200 2q0-1.500 1.500-1.500h3q1 0 1.500 1.500z" fill="#f7ebc0" stroke="#cdb26a" stroke-width=".6"/><path d="M.800 3q0-1 1-1h11.700q1 0 1 1v7q0 2.200-2.200 2.200h-9.300q-2.200 0-2.200-2.200z" fill="url(#gB)" stroke="#5b86c4" stroke-width=".8"/></svg>
<svg style="left:8.5px;top:151.5px;" width="16" height="16" viewBox="0 0 16 16"><path d="M6 4.500l4 4-4 4" fill="none" stroke="#a3a3a3" stroke-width="2"/></svg>
<span class="t" style='left:49.4px;top:169.00px;font-size:12px;line-height:16px;color:#111;font-family:"Liberation Sans", sans-serif;letter-spacing:0.075px;'>produtos</span>
<svg style="left:28px;top:169px;" width="16" height="16" viewBox="0 0 16 16"><path d="M1.200 2q0-1.500 1.500-1.500h3q1 0 1.500 1.500z" fill="#f7ebc0" stroke="#cdb26a" stroke-width=".6"/><path d="M.800 3q0-1 1-1h11.700q1 0 1 1v7q0 2.200-2.200 2.200h-9.300q-2.200 0-2.200-2.200z" fill="url(#gB)" stroke="#5b86c4" stroke-width=".8"/></svg>
<svg style="left:8.5px;top:169.5px;" width="16" height="16" viewBox="0 0 16 16"><path d="M6 4.500l4 4-4 4" fill="none" stroke="#a3a3a3" stroke-width="2"/></svg>
<span class="t" style='left:49.4px;top:187.00px;font-size:12px;line-height:16px;color:#111;font-family:"Liberation Sans", sans-serif;letter-spacing:-0.678px;'>Servers</span>
<svg style="left:28px;top:187px;" width="16" height="16" viewBox="0 0 16 16"><path d="M1.300 11.500v-8.500q0-1.200 1.200-1.200h3l1.200 1.500h5q1 0 1 1v2" fill="url(#gY)" stroke="#c29a3c" stroke-width=".8"/><path d="M1.300 12l2.400-5.500h11.500l-2.900 5.500z" fill="url(#gB)" stroke="#4f7cc0" stroke-width=".8"/></svg>
<svg style="left:8.5px;top:187.5px;" width="16" height="16" viewBox="0 0 16 16"><path d="M6 4.500l4 4-4 4" fill="none" stroke="#a3a3a3" stroke-width="2"/></svg>
<span class="t" style='left:49.4px;top:205.00px;font-size:12px;line-height:16px;color:#111;font-family:"Liberation Sans", sans-serif;letter-spacing:-0.202px;'>servico</span>
<svg style="left:28px;top:205px;" width="16" height="16" viewBox="0 0 16 16"><path d="M5 8.5h8.5q1.5-.5 2-2l-2.5 5.5h-9z" fill="url(#gB)" stroke="#4f7cc0" stroke-width=".7"/><path d="M6 3.5h3v2h5" fill="none" stroke="#c9a85a" stroke-width="1"/><path d="M12.2 1.5v4.2q0 1.3-1.3 1.3h-.6" fill="none" stroke="#3060b0" stroke-width="1.3"/><path d="M1 5.5v-4l1.7 2.2 1.7-2.2v4" fill="none" stroke="#2456a8" stroke-width="1.1"/><rect x="0" y="9" width="7" height="7" fill="#d9434e" stroke="#b52a36" stroke-width=".6"/><path d="M1.8 10.8l3.4 3.4M5.2 10.8l-3.4 3.4" stroke="#fff" stroke-width="1.3"/></svg>
<svg style="left:8.5px;top:205.5px;" width="16" height="16" viewBox="0 0 16 16"><path d="M4 6.500l4.200 4.200 4.200-4.200" fill="none" stroke="#3c3c3c" stroke-width="1.900"/></svg>
<span class="t" style='left:68.4px;top:223.00px;font-size:12px;line-height:16px;color:#111;font-family:"Liberation Sans", sans-serif;letter-spacing:-0.081px;'>Deployment Descriptor: servico</span>
<svg style="left:47px;top:223px;" width="16" height="16" viewBox="0 0 16 16"><circle cx="5" cy="4.5" r="4" fill="url(#gE)" stroke="#4a78a8" stroke-width=".5"/><path d="M3.0 3.3q2.0 -2.4 3.6 0q-0.8 2.8 -2.4 2.0z" fill="#7fc66a"/><rect x="3.5" y="6.5" width="12" height="8.5" fill="#fff" stroke="#2b3f66" stroke-width="1"/><rect x="3.5" y="6.5" width="12" height="1.6" fill="#6b87c0"/><text x="4.6" y="14" font-family="Liberation Sans,sans-serif" font-size="6.5" font-weight="bold" fill="#111" textLength="10">2.5</text></svg>
<svg style="left:27.5px;top:223.5px;" width="16" height="16" viewBox="0 0 16 16"><path d="M6 4.500l4 4-4 4" fill="none" stroke="#a3a3a3" stroke-width="2"/></svg>
<span class="t" style='left:68.4px;top:241.00px;font-size:12px;line-height:16px;color:#111;font-family:"Liberation Sans", sans-serif;letter-spacing:-0.520px;'>JAX-WS Web Services</span>
<svg style="left:47px;top:241px;" width="16" height="16" viewBox="0 0 16 16"><circle cx="11" cy="5" r="4" fill="url(#gE)" stroke="#4a78a8" stroke-width=".5"/><path d="M9.0 3.8q2.0 -2.4 3.6 0q-0.8 2.8 -2.4 2.0z" fill="#7fc66a"/><path d="M7 3l5.5 9.5h-11z" fill="#b8cdf0" stroke="#3050a0" stroke-width=".8"/><path d="M0.8 13.5h13" stroke="#1c3a8c" stroke-width="1.6"/><path d="M7 3.2l-2.2 4h4.4z" fill="#fff" opacity=".8"/></svg>
<svg style="left:27.5px;top:241.5px;" width="16" height="16" viewBox="0 0 16 16"><path d="M6 4.500l4 4-4 4" fill="none" stroke="#a3a3a3" stroke-width="2"/></svg>
<span class="t" style='left:68.4px;top:259.00px;font-size:12px;line-height:16px;color:#111;font-family:"Liberation Sans", sans-serif;letter-spacing:-0.427px;'>Web Resources</span>
<svg style="left:47px;top:259px;" width="16" height="16" viewBox="0 0 16 16"><path d="M.5 .5h11l4 4v11h-15z" fill="#dfe8f4" stroke="#9aa6b8" stroke-width=".8"/><path d="M11.5 .5v4h4" fill="#f6e2b0" stroke="#c9a85a" stroke-width=".6"/><rect x="1.5" y="10.5" width="13" height="4" fill="#7cae5a"/><rect x="1.5" y="3" width="13" height="7.5" fill="#b9cce6"/><path d="M6 5h2.5v7.5h-2.5z" fill="#222"/><path d="M5 6.5l2-1.5M8.5 5v7" stroke="#111" stroke-width="1.2"/></svg>
<svg style="left:27.5px;top:259.5px;" width="16" height="16" viewBox="0 0 16 16"><path d="M6 4.500l4 4-4 4" fill="none" stroke="#a3a3a3" stroke-width="2"/></svg>
<span class="t" style='left:68.4px;top:277.00px;font-size:12px;line-height:16px;color:#111;font-family:"Liberation Sans", sans-serif;letter-spacing:-0.203px;'>JPA Content</span>
<svg style="left:47px;top:277px;" width="16" height="16" viewBox="0 0 16 16"><path d="M1 8.500l4.800-4.500v9z" fill="#5c9bdc" stroke="#2f6fb8" stroke-width=".7"/><path d="M15 8.500l-4.800-4.500v9z" fill="#e9b043" stroke="#b8842a" stroke-width=".7"/><path d="M7.200 4v9M8.800 4v9" stroke="#3a3a3a" stroke-width=".8"/></svg>
<svg style="left:27.5px;top:277.5px;" width="16" height="16" viewBox="0 0 16 16"><path d="M6 4.500l4 4-4 4" fill="none" stroke="#a3a3a3" stroke-width="2"/></svg>
<span class="t" style='left:68.4px;top:295.00px;font-size:12px;line-height:16px;color:#111;font-family:"Liberation Sans", sans-serif;letter-spacing:-0.632px;'>Java Resources</span>
<svg style="left:47px;top:295px;" width="16" height="16" viewBox="0 0 16 16"><circle cx="4.5" cy="4" r="3.6" fill="url(#gE)" stroke="#4a78a8" stroke-width=".5"/><path d="M2.7 2.92q1.8 -2.16 3.24 0q-0.7200000000000001 2.52 -2.16 1.8z" fill="#7fc66a"/><path d="M5 8h10l-2.5 6h-8z" fill="url(#gY)" stroke="#b8913c" stroke-width=".7"/><rect x="8" y="2.5" width="6.5" height="5.5" fill="#edc88a" stroke="#7a4e1c" stroke-width=".8"/><path d="M11.2 2.5v5.5M8 5.2h6.5" stroke="#7a4e1c" stroke-width=".9"/><rect x="0" y="9" width="7" height="7" fill="#d9434e" stroke="#b52a36" stroke-width=".6"/><path d="M1.8 10.8l3.4 3.4M5.2 10.8l-3.4 3.4" stroke="#fff" stroke-width="1.3"/></svg>
<svg style="left:27.5px;top:295.5px;" width="16" height="16" viewBox="0 0 16 16"><path d="M4 6.500l4.200 4.200 4.200-4.200" fill="none" stroke="#3c3c3c" stroke-width="1.900"/></svg>
<span class="t" style='left:87.4px;top:313.00px;font-size:12px;line-height:16px;color:#111;font-family:"Liberation Sans", sans-serif;letter-spacing:0.124px;'>src/main/java</span>
<svg style="left:66px;top:313px;" width="16" height="16" viewBox="0 0 16 16"><path d="M3 8h12l-3 6h-10z" fill="url(#gY)" stroke="#b8913c" stroke-width=".7"/><path d="M3 8l3-4h3" fill="none" stroke="#b8913c" stroke-width=".7"/><rect x="8" y="1.5" width="6.5" height="6" fill="#edc88a" stroke="#7a4e1c" stroke-width=".8"/><path d="M11.2 1.5v6M8 4.5h6.5" stroke="#7a4e1c" stroke-width=".9"/><rect x="0" y="9" width="7" height="7" fill="#d9434e" stroke="#b52a36" stroke-width=".6"/><path d="M1.8 10.8l3.4 3.4M5.2 10.8l-3.4 3.4" stroke="#fff" stroke-width="1.3"/></svg>
<svg style="left:46.5px;top:313.5px;" width="16" height="16" viewBox="0 0 16 16"><path d="M4 6.500l4.200 4.200 4.200-4.200" fill="none" stroke="#3c3c3c" stroke-width="1.900"/></svg>
<span class="t" style='left:106.4px;top:331.00px;font-size:12px;line-height:16px;color:#111;font-family:"Liberation Sans", sans-serif;letter-spacing:-0.451px;'>bean</span>
<svg style="left:85px;top:331px;" width="16" height="16" viewBox="0 0 16 16"><rect x="5" y="1.5" width="10" height="10" rx="1" fill="url(#gP)" stroke="#9a6a2c" stroke-width=".7"/><path d="M10 1.5v10M5 6.5h10" stroke="#7a4e1c" stroke-width="1.2"/><rect x="0" y="9" width="7" height="7" fill="#d9434e" stroke="#b52a36" stroke-width=".6"/><path d="M1.8 10.8l3.4 3.4M5.2 10.8l-3.4 3.4" stroke="#fff" stroke-width="1.3"/></svg>
<svg style="left:65.5px;top:331.5px;" width="16" height="16" viewBox="0 0 16 16"><path d="M6 4.500l4 4-4 4" fill="none" stroke="#a3a3a3" stroke-width="2"/></svg>
<span class="t" style='left:106.4px;top:349.00px;font-size:12px;line-height:16px;color:#111;font-family:"Liberation Sans", sans-serif;letter-spacing:-0.059px;'>converter</span>
<svg style="left:85px;top:349px;" width="16" height="16" viewBox="0 0 16 16"><rect x="3.500" y="3.500" width="10" height="10" fill="#fff" stroke="#5a5a5a" stroke-width="1"/><path d="M8.500 2v13M2 8.500h13" stroke="#5a5a5a" stroke-width="1"/></svg>
<span class="t" style='left:106.4px;top:367.00px;font-size:12px;line-height:16px;color:#111;font-family:"Liberation Sans", sans-serif;letter-spacing:-0.277px;'>dao</span>
<svg style="left:85px;top:367px;" width="16" height="16" viewBox="0 0 16 16"><rect x="5" y="1.5" width="10" height="10" rx="1" fill="url(#gP)" stroke="#9a6a2c" stroke-width=".7"/><path d="M10 1.5v10M5 6.5h10" stroke="#7a4e1c" stroke-width="1.2"/><rect x="0" y="9" width="7" height="7" fill="#d9434e" stroke="#b52a36" stroke-width=".6"/><path d="M1.8 10.8l3.4 3.4M5.2 10.8l-3.4 3.4" stroke="#fff" stroke-width="1.3"/></svg>
<svg style="left:65.5px;top:367.5px;" width="16" height="16" viewBox="0 0 16 16"><path d="M4 6.500l4.200 4.200 4.200-4.200" fill="none" stroke="#3c3c3c" stroke-width="1.900"/></svg>
<span class="t" style='left:125.4px;top:385.00px;font-size:12px;line-height:16px;color:#111;font-family:"Liberation Sans", sans-serif;letter-spacing:-0.445px;'>DAO.java</span>
<svg style="left:104px;top:385px;" width="16" height="16" viewBox="0 0 16 16"><path d="M3.5 1.5h7l3.5 3.5v9.5h-10.5z" fill="#fffdf0" stroke="#b39a5a" stroke-width=".8"/><path d="M10.5 1.5v3.5h3.5" fill="#f3e3b3" stroke="#b39a5a" stroke-width=".6"/><path d="M10 4v5.8q0 2-2 2h-1" fill="none" stroke="#2f5fb3" stroke-width="1.7"/><rect x="0" y="9" width="7" height="7" fill="#d9434e" stroke="#b52a36" stroke-width=".6"/><path d="M1.8 10.8l3.4 3.4M5.2 10.8l-3.4 3.4" stroke="#fff" stroke-width="1.3"/></svg>
<svg style="left:84.5px;top:385.5px;" width="16" height="16" viewBox="0 0 16 16"><path d="M4 6.500l4.200 4.200 4.200-4.200" fill="none" stroke="#3c3c3c" stroke-width="1.900"/></svg>
<span class="t" style='left:144.4px;top:403.00px;font-size:12px;line-height:16px;color:#111;font-family:"Liberation Sans", sans-serif;letter-spacing:-0.210px;'>DAO&lt;T&gt;</span>
<svg style="left:123px;top:403px;" width="16" height="16" viewBox="0 0 16 16"><circle cx="9.5" cy="7" r="6" fill="url(#gG)" stroke="#1d7a22" stroke-width=".6"/><path d="M12.2 5.2a3.3 3.3 0 1 0 0 3.8" fill="none" stroke="#fff" stroke-width="1.7"/><rect x="0" y="9" width="7" height="7" fill="#d9434e" stroke="#b52a36" stroke-width=".6"/><path d="M1.8 10.8l3.4 3.4M5.2 10.8l-3.4 3.4" stroke="#fff" stroke-width="1.3"/></svg>
<svg style="left:103.5px;top:403.5px;" width="16" height="16" viewBox="0 0 16 16"><path d="M6 4.500l4 4-4 4" fill="none" stroke="#a3a3a3" stroke-width="2"/></svg>
<span class="t" style='left:125.4px;top:421.00px;font-size:12px;line-height:16px;color:#111;font-family:"Liberation Sans", sans-serif;letter-spacing:-0.217px;'>LoginDAO.java</span>
<svg style="left:104px;top:421px;" width="16" height="16" viewBox="0 0 16 16"><path d="M3.5 1.5h7l3.5 3.5v9.5h-10.5z" fill="#fffdf0" stroke="#b39a5a" stroke-width=".8"/><path d="M10.5 1.5v3.5h3.5" fill="#f3e3b3" stroke="#b39a5a" stroke-width=".6"/><path d="M10 4v5.8q0 2-2 2h-1" fill="none" stroke="#2f5fb3" stroke-width="1.7"/><rect x="0" y="9" width="7" height="7" fill="#d9434e" stroke="#b52a36" stroke-width=".6"/><path d="M1.8 10.8l3.4 3.4M5.2 10.8l-3.4 3.4" stroke="#fff" stroke-width="1.3"/></svg>
<svg style="left:84.5px;top:421.5px;" width="16" height="16" viewBox="0 0 16 16"><path d="M6 4.500l4 4-4 4" fill="none" stroke="#a3a3a3" stroke-width="2"/></svg>
<span class="t" style='left:106.4px;top:439.00px;font-size:12px;line-height:16px;color:#111;font-family:"Liberation Sans", sans-serif;letter-spacing:0.042px;'>model</span>
<svg style="left:85px;top:439px;" width="16" height="16" viewBox="0 0 16 16"><rect x="5" y="1.5" width="10" height="10" rx="1" fill="url(#gP)" stroke="#9a6a2c" stroke-width=".7"/><path d="M10 1.5v10M5 6.5h10" stroke="#7a4e1c" stroke-width="1.2"/><rect x="0" y="9" width="7" height="7" fill="#d9434e" stroke="#b52a36" stroke-width=".6"/><path d="M1.8 10.8l3.4 3.4M5.2 10.8l-3.4 3.4" stroke="#fff" stroke-width="1.3"/></svg>
<svg style="left:65.5px;top:439.5px;" width="16" height="16" viewBox="0 0 16 16"><path d="M6 4.500l4 4-4 4" fill="none" stroke="#a3a3a3" stroke-width="2"/></svg>
<span class="t" style='left:106.4px;top:457.00px;font-size:12px;line-height:16px;color:#111;font-family:"Liberation Sans", sans-serif;letter-spacing:0.289px;'>util</span>
<svg style="left:85px;top:457px;" width="16" height="16" viewBox="0 0 16 16"><rect x="5" y="1.5" width="10" height="10" rx="1" fill="url(#gP)" stroke="#9a6a2c" stroke-width=".7"/><path d="M10 1.5v10M5 6.5h10" stroke="#7a4e1c" stroke-width="1.2"/><rect x="0" y="9" width="7" height="7" fill="#d9434e" stroke="#b52a36" stroke-width=".6"/><path d="M1.8 10.8l3.4 3.4M5.2 10.8l-3.4 3.4" stroke="#fff" stroke-width="1.3"/></svg>
<svg style="left:65.5px;top:457.5px;" width="16" height="16" viewBox="0 0 16 16"><path d="M6 4.500l4 4-4 4" fill="none" stroke="#a3a3a3" stroke-width="2"/></svg>
<div style="left:4px;top:465.2px;width:279px;height:3px;background:#fff;"></div>
<div style="left:0px;top:468px;width:303px;height:5.5px;background:#e3e5f6;"></div>
<div style="left:306.5px;top:101px;width:1023.5px;height:367px;background:#fff;border-radius:6px 6px 5px 5px;box-shadow:0 0 0 1px rgba(150,158,190,.38);"></div>
<div style="left:306px;top:101px;width:1024px;height:24px;background:#d2dfee;border-radius:6px 6px 0 0;"></div>
<div style="left:306px;top:124.5px;width:1024px;height:1px;background:#b9c3d3;"></div>
<div style="left:306px;top:101px;width:99.5px;height:24.5px;background:#fff;border-radius:6px 9px 0 0;border-right:1px solid #b4bccb;box-sizing:border-box;"></div>
<span class="t" style='left:331px;top:105.80px;font-size:12px;line-height:16px;color:#1a1a1a;font-family:"Liberation Sans", sans-serif;letter-spacing:-0.357px;'>DAO.java</span>
<svg style="left:310px;top:105px;" width="16" height="16" viewBox="0 0 16 16"><path d="M3.5 1.5h7l3.5 3.5v9.5h-10.5z" fill="#fffdf0" stroke="#b39a5a" stroke-width=".8"/><path d="M10.5 1.5v3.5h3.5" fill="#f3e3b3" stroke="#b39a5a" stroke-width=".6"/><path d="M10 4v5.8q0 2-2 2h-1" fill="none" stroke="#2f5fb3" stroke-width="1.7"/><rect x="0" y="9" width="7" height="7" fill="#d9434e" stroke="#b52a36" stroke-width=".6"/><path d="M1.8 10.8l3.4 3.4M5.2 10.8l-3.4 3.4" stroke="#fff" stroke-width="1.3"/></svg>
<svg style="left:385.85px;top:106.75px;" width="14.5" height="14.5" viewBox="0 0 16 16"><path d="M2.800 5L5 2.800 8 5.800 11 2.800 13.200 5 10.200 8 13.200 11 11 13.200 8 10.200 5 13.200 2.800 11 5.800 8Z" fill="#fff" stroke="#4a4a4a" stroke-width="1.100" stroke-linejoin="round"/></svg>
<svg style="left:1279px;top:104px;" width="16" height="16" viewBox="0 0 16 16"><rect x="3.500" y="4.500" width="9" height="3" fill="#fff" stroke="#555" stroke-width="1"/></svg>
<svg style="left:1302px;top:104px;" width="16" height="16" viewBox="0 0 16 16"><rect x="3.500" y="4.500" width="9" height="9" fill="#fff" stroke="#555" stroke-width="1"/><path d="M3.500 5.500h9" stroke="#555" stroke-width="1"/></svg>
<div style="left:354px;top:128px;width:943px;height:15px;background:#e8f2fe;"></div>
<div style="left:1298px;top:128px;width:15.5px;height:322px;background:#f0f0f0;"></div>
<div style="left:1298px;top:146px;width:15.5px;height:61px;background:#cdcdcd;"></div>
<div style="left:1313.5px;top:128px;width:16px;height:322px;background:#f7f7f8;"></div>
<div style="left:309px;top:128px;width:12px;height:15px;background:repeating-conic-gradient(#1b84cf 0 25%,#cfe8fa 0 50%) 0 0/2px 2px;"></div>
<svg style="left:309px;top:159.5px;" width="16" height="16" viewBox="0 0 16 16"><path d="M3.8 1a3.2 3.2 0 0 1 2 5.8l-.4 2h-3l-.5-2a3.2 3.2 0 0 1 1.9-5.8z" fill="#fdf3b8" stroke="#d7b24a" stroke-width=".8"/><path d="M2.6 9.5h2.6v1.6h-2.6z" fill="#4a5f9a"/><rect x="5.5" y="4.5" width="7" height="7.5" fill="#dc4953" stroke="#b52a36" stroke-width=".6"/><path d="M7 6.2l4 4.2M11 6.2l-4 4.2" stroke="#fff" stroke-width="1.4"/></svg>
<svg style="left:308px;top:353px;" width="16" height="16" viewBox="0 0 16 16"><circle cx="7" cy="8" r="6.3" fill="url(#gR)" stroke="#9b1015" stroke-width=".6"/><path d="M4.3 5.3l5.4 5.4M9.7 5.3l-5.4 5.4" stroke="#fff" stroke-width="2"/></svg>
<svg style="left:338.5px;top:157.5px;" width="16" height="16" viewBox="0 0 16 16"><circle cx="8" cy="8" r="4.200" fill="#e9f0fa" stroke="#8ea4c6" stroke-width="1"/><path d="M5.400 8h5.200M8 5.400v5.200" stroke="#16264e" stroke-width="1.300"/></svg>
<svg style="left:338.5px;top:277.5px;" width="16" height="16" viewBox="0 0 16 16"><circle cx="8" cy="8" r="4.200" fill="#eef3fa" stroke="#a9bad4" stroke-width="1"/><path d="M5.8 8h4.4" stroke="#5f7aa6" stroke-width="1.1"/></svg>
<svg style="left:338.5px;top:337.5px;" width="16" height="16" viewBox="0 0 16 16"><circle cx="8" cy="8" r="4.200" fill="#eef3fa" stroke="#a9bad4" stroke-width="1"/><path d="M5.8 8h4.4" stroke="#5f7aa6" stroke-width="1.1"/></svg>
<svg style="left:1297.7px;top:129px;" width="16" height="16" viewBox="0 0 16 16"><path d="M4.5 10l3.5-3.7 3.5 3.7" fill="none" stroke="#444" stroke-width="1.9"/></svg>
<svg style="left:1297.7px;top:433px;" width="16" height="16" viewBox="0 0 16 16"><path d="M4.5 6l3.5 3.7 3.5-3.7" fill="none" stroke="#444" stroke-width="1.9"/></svg>
<div style="left:1316px;top:132px;width:8px;height:8px;background:#e5006e;border:1px solid #b8508a;box-sizing:border-box;"></div>
<div style="left:1314px;top:144px;width:13px;height:1px;background:#c4c4c4;"></div>
<div style="left:1316px;top:148px;width:9px;height:5px;background:#f9c3de;border:1px solid #e0559a;box-sizing:border-box;"></div>
<div style="left:1316px;top:190px;width:9px;height:5px;background:#f9c3de;border:1px solid #e0559a;box-sizing:border-box;"></div>
<div style="left:1316px;top:213px;width:9px;height:5px;background:#f9c3de;border:1px solid #e0559a;box-sizing:border-box;"></div>
<div style="left:1316px;top:240px;width:9px;height:5px;background:#f9c3de;border:1px solid #e0559a;box-sizing:border-box;"></div>
<div style="left:1316px;top:269px;width:9px;height:5px;background:#f9c3de;border:1px solid #e0559a;box-sizing:border-box;"></div>
<div style="left:1316px;top:275px;width:9px;height:5px;background:#f9c3de;border:1px solid #e0559a;box-sizing:border-box;"></div>
<div style="left:1316px;top:305px;width:9px;height:5px;background:#f9c3de;border:1px solid #e0559a;box-sizing:border-box;"></div>
<div style="left:1316px;top:311px;width:9px;height:5px;background:#f9c3de;border:1px solid #e0559a;box-sizing:border-box;"></div>
<div style="left:1316px;top:337px;width:9px;height:5px;background:#f9c3de;border:1px solid #e0559a;box-sizing:border-box;"></div>
<div style="left:1316px;top:367px;width:9px;height:5px;background:#f9c3de;border:1px solid #e0559a;box-sizing:border-box;"></div>
<div style="left:1316px;top:395.5px;width:9px;height:5px;background:#f9c3de;border:1px solid #e0559a;box-sizing:border-box;"></div>
<span class="t" style='left:334.5px;top:128.90px;font-size:12px;line-height:16px;color:#787878;font-family:"Liberation Mono", monospace;letter-spacing:-0.203px;'>1</span>
<span class="t" style='left:354px;top:128.90px;font-size:12px;line-height:16px;color:#000;font-family:"Liberation Mono", monospace;letter-spacing:-0.2px;'><span class="k">package</span> dao;</span>
<span class="t" style='left:334.5px;top:143.90px;font-size:12px;line-height:16px;color:#787878;font-family:"Liberation Mono", monospace;letter-spacing:-0.203px;'>2</span>
<span class="t" style='left:334.5px;top:158.90px;font-size:12px;line-height:16px;color:#787878;font-family:"Liberation Mono", monospace;letter-spacing:-0.203px;'>3</span>
<span class="t" style='left:354px;top:158.90px;font-size:12px;line-height:16px;color:#000;font-family:"Liberation Mono", monospace;letter-spacing:-0.2px;'><span class="k">import</span> java.io.Serializable;</span>
<span class="t" style='left:327.5px;top:173.90px;font-size:12px;line-height:16px;color:#787878;font-family:"Liberation Mono", monospace;letter-spacing:-0.203px;'>11</span>
<span class="t" style='left:327.5px;top:188.90px;font-size:12px;line-height:16px;color:#787878;font-family:"Liberation Mono", monospace;letter-spacing:-0.203px;'>12</span>
<span class="t" style='left:354px;top:188.90px;font-size:12px;line-height:16px;color:#000;font-family:"Liberation Mono", monospace;letter-spacing:-0.2px;'><span class="k">public</span> <span class="k">class</span> DAO&lt;T&gt; <span class="k">implements</span> Serializable {</span>
<span class="t" style='left:327.5px;top:203.90px;font-size:12px;line-height:16px;color:#787878;font-family:"Liberation Mono", monospace;letter-spacing:-0.203px;'>13</span>
<span class="t" style='left:327.5px;top:218.90px;font-size:12px;line-height:16px;color:#787878;font-family:"Liberation Mono", monospace;letter-spacing:-0.203px;'>14</span>
<span class="t" style='left:354px;top:218.90px;font-size:12px;line-height:16px;color:#000;font-family:"Liberation Mono", monospace;letter-spacing:-0.2px;'>    <span class="k">private</span> <span class="k">static</span> <span class="k">final</span> <span class="k">long</span> <span class="f" style="font-style:italic;font-weight:bold">serialVersionUID</span> = 1L;</span>
<span class="t" style='left:327.5px;top:233.90px;font-size:12px;line-height:16px;color:#787878;font-family:"Liberation Mono", monospace;letter-spacing:-0.203px;'>15</span>
<span class="t" style='left:327.5px;top:248.90px;font-size:12px;line-height:16px;color:#787878;font-family:"Liberation Mono", monospace;letter-spacing:-0.203px;'>16</span>
<span class="t" style='left:354px;top:248.90px;font-size:12px;line-height:16px;color:#000;font-family:"Liberation Mono", monospace;letter-spacing:-0.2px;'>    <span class="k">private</span> <span class="k">final</span> Class&lt;T&gt; </span>
<span class="t" style='left:327.5px;top:263.90px;font-size:12px;line-height:16px;color:#787878;font-family:"Liberation Mono", monospace;letter-spacing:-0.203px;'>17</span>
<span class="t" style='left:327.5px;top:278.90px;font-size:12px;line-height:16px;color:#787878;font-family:"Liberation Mono", monospace;letter-spacing:-0.203px;'>18</span>
<span class="t" style='left:354px;top:278.90px;font-size:12px;line-height:16px;color:#000;font-family:"Liberation Mono", monospace;letter-spacing:-0.2px;'>    <span class="k">public</span> DAO(Class&lt;T&gt; <span class="v">cla</span></span>
<span class="t" style='left:327.5px;top:293.90px;font-size:12px;line-height:16px;color:#787878;font-family:"Liberation Mono", monospace;letter-spacing:-0.203px;'>19</span>
<span class="t" style='left:354px;top:293.90px;font-size:12px;line-height:16px;color:#000;font-family:"Liberation Mono", monospace;letter-spacing:-0.2px;'>        <span class="k">this</span>.<span class="f">classe</span> = <span class="v">class</span></span>
<span class="t" style='left:327.5px;top:308.90px;font-size:12px;line-height:16px;color:#787878;font-family:"Liberation Mono", monospace;letter-spacing:-0.203px;'>20</span>
<span class="t" style='left:354px;top:308.90px;font-size:12px;line-height:16px;color:#000;font-family:"Liberation Mono", monospace;letter-spacing:-0.2px;'>    }</span>
<span class="t" style='left:327.5px;top:323.90px;font-size:12px;line-height:16px;color:#787878;font-family:"Liberation Mono", monospace;letter-spacing:-0.203px;'>21</span>
<span class="t" style='left:327.5px;top:338.90px;font-size:12px;line-height:16px;color:#787878;font-family:"Liberation Mono", monospace;letter-spacing:-0.203px;'>22</span>
<span class="t" style='left:354px;top:338.90px;font-size:12px;line-height:16px;color:#000;font-family:"Liberation Mono", monospace;letter-spacing:-0.2px;'>    <span class="k">public</span> <span class="k">void</span> adiciona(T </span>
<span class="t" style='left:327.5px;top:353.90px;font-size:12px;line-height:16px;color:#787878;font-family:"Liberation Mono", monospace;letter-spacing:-0.203px;'>23</span>
<span class="t" style='left:354px;top:353.90px;font-size:12px;line-height:16px;color:#000;font-family:"Liberation Mono", monospace;letter-spacing:-0.2px;'>        EntityManager <span class="v">manag</span></span>
<span class="t" style='left:327.5px;top:368.90px;font-size:12px;line-height:16px;color:#787878;font-family:"Liberation Mono", monospace;letter-spacing:-0.203px;'>24</span>
<span class="t" style='left:354px;top:368.90px;font-size:12px;line-height:16px;color:#000;font-family:"Liberation Mono", monospace;letter-spacing:-0.2px;'>        <span class="v">manager</span>.getTransact</span>
<span class="t" style='left:327.5px;top:383.90px;font-size:12px;line-height:16px;color:#787878;font-family:"Liberation Mono", monospace;letter-spacing:-0.203px;'>25</span>
<span class="t" style='left:354px;top:383.90px;font-size:12px;line-height:16px;color:#000;font-family:"Liberation Mono", monospace;letter-spacing:-0.2px;'>        <span class="v">manager</span>.persist(<span class="v">t</span>);</span>
<span class="t" style='left:327.5px;top:398.90px;font-size:12px;line-height:16px;color:#787878;font-family:"Liberation Mono", monospace;letter-spacing:-0.203px;'>26</span>
<span class="t" style='left:354px;top:398.90px;font-size:12px;line-height:16px;color:#000;font-family:"Liberation Mono", monospace;letter-spacing:-0.2px;'>        <span class="v">manager</span>.getTransact</span>
<span class="t" style='left:327.5px;top:413.90px;font-size:12px;line-height:16px;color:#787878;font-family:"Liberation Mono", monospace;letter-spacing:-0.203px;'>27</span>
<span class="t" style='left:354px;top:413.90px;font-size:12px;line-height:16px;color:#000;font-family:"Liberation Mono", monospace;letter-spacing:-0.2px;'>        <span class="v">manager</span>.close();</span>
<span class="t" style='left:327.5px;top:428.90px;font-size:12px;line-height:16px;color:#787878;font-family:"Liberation Mono", monospace;letter-spacing:-0.203px;'>28</span>
<span class="t" style='left:354px;top:428.90px;font-size:12px;line-height:16px;color:#000;font-family:"Liberation Mono", monospace;letter-spacing:-0.2px;'>    }</span>
<span class="t" style='left:327.5px;top:443.90px;font-size:12px;line-height:16px;color:#787878;font-family:"Liberation Mono", monospace;letter-spacing:-0.203px;'>29</span>
<svg style="left:410px;top:364.500px" width="92" height="4" viewBox="0 0 92 4"><path d="M0 2.500l1.500 -1.700l1.500 1.700l1.500 -1.700l1.500 1.700l1.500 -1.700l1.500 1.700l1.500 -1.700l1.500 1.700l1.500 -1.700l1.500 1.700l1.500 -1.700l1.500 1.700l1.500 -1.700l1.500 1.700l1.500 -1.700l1.500 1.700l1.500 -1.700l1.500 1.700l1.500 -1.700l1.500 1.700l1.500 -1.700l1.500 1.700l1.500 -1.700l1.500 1.700l1.500 -1.700l1.500 1.700l1.500 -1.700l1.500 1.700l1.500 -1.700l1.500 1.700l1.500 -1.700l1.500 1.700l1.500 -1.700l1.500 1.700l1.500 -1.700l1.500 1.700l1.500 -1.700l1.500 1.700l1.500 -1.700l1.500 1.700l1.500 -1.700l1.500 1.700l1.500 -1.700l1.500 1.700l1.500 -1.700l1.500 1.700l1.500 -1.700l1.500 1.700l1.500 -1.700l1.500 1.700l1.500 -1.700l1.500 1.700l1.500 -1.700l1.500 1.700l1.500 -1.700l1.500 1.700l1.500 -1.700l1.500 1.700l1.500 -1.700l1.500 1.700l1.500 -1.700l1.500 1.700" fill="none" stroke="#e0262d" stroke-width=".9"/></svg>
<div style="left:308px;top:449.4px;width:1021px;height:18px;background:#fff;border-radius:0 0 5px 5px;"></div>
<div style="left:352px;top:450px;width:945px;height:16px;background:linear-gradient(90deg,#f9f9f9,#efefef 30px);"></div>
<div style="left:1297px;top:450px;width:16.5px;height:16px;background:#f0f0f0;"></div>
<div style="left:1313.5px;top:450px;width:16px;height:17.5px;background:#f7f7f8;border-radius:0 0 5px 0;"></div>
<svg style="left:352px;top:449.5px;" width="16" height="16" viewBox="0 0 16 16"><path d="M10 4.500l-4 3.500 4 3.500" fill="none" stroke="#c3c3c3" stroke-width="2"/></svg>
<svg style="left:1280.5px;top:449.5px;" width="16" height="16" viewBox="0 0 16 16"><path d="M6 4.500l4 3.500-4 3.500" fill="none" stroke="#c3c3c3" stroke-width="2"/></svg>
<div style="left:1333.5px;top:100.5px;width:32px;height:79.5px;background:#e9ecf8;border:1px solid #c6cbe0;border-radius:5px;box-sizing:border-box;"></div>
<svg style="left:1340px;top:105px" width="20" height="4" viewBox="0 0 20 4"><path d="M1 2h18" stroke="#9aa2b8" stroke-width="1.600" stroke-dasharray="1.600 3.600"/></svg>
<svg style="left:1341px;top:115px;" width="16" height="16" viewBox="0 0 16 16"><rect x="5.500" y="2.500" width="6" height="4" fill="#fff" stroke="#444" stroke-width="1"/><path d="M5.500 3.500h6" stroke="#444" stroke-width="1"/><rect x="3.500" y="5.500" width="6" height="4" fill="#fff" stroke="#444" stroke-width="1"/><path d="M3.500 6.500h6" stroke="#444" stroke-width="1"/></svg>
<svg style="left:1340.5px;top:135.5px;" width="16" height="16" viewBox="0 0 16 16"><rect x="1.5" y="1.5" width="5" height="5" fill="#bfe0fb" stroke="#2f7fc8" stroke-width="1"/><rect x="1.5" y="10" width="5" height="5" fill="#bfe0fb" stroke="#2f7fc8" stroke-width="1"/><path d="M8.5 4h5.5M8.5 12.5h5.5M12.5 8.2h2" stroke="#2f6fa8" stroke-width="1"/><rect x="9" y="7" width="2.4" height="2.4" fill="#fff" stroke="#2f6fa8" stroke-width=".9"/></svg>
<svg style="left:1341.5px;top:157px;" width="16" height="16" viewBox="0 0 16 16"><path d="M3.500 1.500h9v11.500l-1.500 .5q-1.500 1.600-3 1.500t-3-1.500l-1.500-.5z" fill="#fbfbfd" stroke="#4a4a4a" stroke-width="1"/><path d="M5 4.500h6M5 6.500h6M5 8.500h6M5 10.500h6" stroke="#3c3c3c" stroke-width="1"/><path d="M4 12.500h8v.700l-1.500.500q-2.500 2-5 0l-1.500-.500z" fill="#8f96c0"/></svg>
<div style="left:3px;top:473.2px;width:1327px;height:225.8px;box-shadow:0 0 0 1px rgba(160,166,196,.28);background:#fff;border-radius:6px 6px 5px 5px;"></div>
<div style="left:3px;top:473.2px;width:1327px;height:25.3px;background:linear-gradient(#f1f3fb,#fbfbfe);border-radius:6px 6px 0 0;"></div>
<div style="left:439px;top:473.2px;width:94px;height:25.3px;background:linear-gradient(#e2e7f2,#fff 85%);border-radius:9px 9px 0 0;"></div>
<span class="t" style='left:27.7px;top:478.80px;font-size:12px;line-height:16px;color:#9a9a9a;font-family:"Liberation Sans", sans-serif;letter-spacing:-0.263px;'>Markers</span>
<span class="t" style='left:100px;top:478.80px;font-size:12px;line-height:16px;color:#9a9a9a;font-family:"Liberation Sans", sans-serif;letter-spacing:-0.220px;'>Properties</span>
<span class="t" style='left:182.7px;top:478.80px;font-size:12px;line-height:16px;color:#9a9a9a;font-family:"Liberation Sans", sans-serif;letter-spacing:-0.347px;'>Data Source Explorer</span>
<span class="t" style='left:320.4px;top:478.80px;font-size:12px;line-height:16px;color:#9a9a9a;font-family:"Liberation Sans", sans-serif;letter-spacing:-0.678px;'>Servers</span>
<span class="t" style='left:387.4px;top:478.80px;font-size:12px;line-height:16px;color:#9a9a9a;font-family:"Liberation Sans", sans-serif;letter-spacing:-0.263px;'>Snippets</span>
<span class="t" style='left:462px;top:478.80px;font-size:12px;line-height:16px;color:#1a1a1a;font-family:"Liberation Sans", sans-serif;letter-spacing:-0.147px;'>Console</span>
<svg style="left:7px;top:479px;" width="16" height="16" viewBox="0 0 16 16"><rect x="1.5" y="1.5" width="13" height="13" fill="#f4f4f4" stroke="#c9c9c9" stroke-width=".8" opacity=".9"/><circle cx="5.5" cy="5" r="2.6" fill="#ee9a9a"/><path d="M3 14.5v-6.5h5v6.5z" fill="#f0b7a8" stroke="#e3c7a0" stroke-width=".6"/><path d="M10 3h4M12 3v11" stroke="#cfcfcf" stroke-width="1.2"/><rect x="4" y="10.5" width="3" height="4" fill="#f3d79a"/></svg>
<svg style="left:80px;top:479px;" width="16" height="16" viewBox="0 0 16 16"><rect x="1.5" y="2.5" width="13" height="11.5" fill="#fbfbfb" stroke="#b9b9b9" stroke-width=".9"/><path d="M1.5 5.5h13M1.5 8.3h13M1.5 11.2h13M6 2.5v11.5" stroke="#c8c8c8" stroke-width=".8"/><path d="M1.5 3.3h13" stroke="#b5b5b5" stroke-width="1.5"/></svg>
<svg style="left:162.5px;top:479px;" width="16" height="16" viewBox="0 0 16 16"><path d="M1 3l4.5-1.5 4.5 1.5 4.5-1.5v11.5l-4.5 1.5-4.5-1.5-4.5 1.5z" fill="#bfe0a6" stroke="#93bf74" stroke-width=".8"/><path d="M5.5 1.5v11.5M10 3v11.5" stroke="#93bf74" stroke-width=".7"/><rect x="9" y="6" width="6" height="3.2" fill="#f6e6a8" stroke="#cbb56a" stroke-width=".6"/><rect x="9" y="10" width="6" height="3.2" fill="#f6e6a8" stroke="#cbb56a" stroke-width=".6"/><path d="M4 8h5" stroke="#7fb5e6" stroke-width="1.2"/></svg>
<svg style="left:302px;top:479px;" width="16" height="16" viewBox="0 0 16 16"><path d="M3.5 1.5v13M8 1.5v13M12.5 1.5v13" stroke="#a8aeb8" stroke-width="1.1"/><rect x="1.8" y="5" width="3.4" height="3" rx=".8" fill="#c9dcae" stroke="#9fb38a" stroke-width=".7"/><rect x="6.3" y="8.5" width="3.4" height="3" rx=".8" fill="#f1dc9a" stroke="#c5b070" stroke-width=".7"/><circle cx="12.5" cy="11.5" r="2" fill="#c6d8ee" stroke="#9aaed0" stroke-width=".7"/></svg>
<svg style="left:368.5px;top:479px;" width="16" height="16" viewBox="0 0 16 16"><path d="M2.5 1.5h8l3 3v10h-11z" fill="#fbfbfb" stroke="#bdbdbd" stroke-width=".9"/><path d="M4 3.5l2 2M4 3.5h2M4 3.5v2" stroke="#b0b0b0" stroke-width=".9" fill="none"/><path d="M5 9h7M5 11.5h7" stroke="#e5b1b1" stroke-width="1.1"/><rect x="4" y="7.8" width="9" height="5" fill="none" stroke="#c9c9c9" stroke-width=".7"/></svg>
<svg style="left:443.5px;top:479px;" width="16" height="16" viewBox="0 0 16 16"><rect x="2" y="2" width="12" height="9.500" rx="1.300" fill="#eef2fa" stroke="#3d5a9c" stroke-width="2"/><path d="M4.800 5.300h5.500M4.800 7.800h3.800" stroke="#3a4a66" stroke-width="1.100"/><path d="M4.300 14.300h7.400" stroke="#3d5a9c" stroke-width="1.600"/><path d="M6.500 12h3v2h-3z" fill="#3d5a9c"/></svg>
<svg style="left:512.1px;top:479.75px;" width="14.5" height="14.5" viewBox="0 0 16 16"><path d="M2.800 5L5 2.800 8 5.800 11 2.800 13.200 5 10.200 8 13.200 11 11 13.200 8 10.200 5 13.200 2.800 11 5.800 8Z" fill="#fff" stroke="#4a4a4a" stroke-width="1.100" stroke-linejoin="round"/></svg>
<svg style="left:1181px;top:478px;" width="16" height="16" viewBox="0 0 16 16"><rect x="1.5" y="6" width="10.5" height="8" fill="#dcdcdc" stroke="#b4b4b4" stroke-width=".8"/><path d="M1.5 7h10.5" stroke="#a9a9a9" stroke-width="1.6"/><path d="M9 7l4.5-4.5 1.5 1.5-4.500 4.5z" fill="#a6a6a6"/><path d="M8 9.5l2.200-2.200" stroke="#8e8e8e" stroke-width="1"/></svg>
<svg style="left:1204px;top:477.8px;" width="16" height="16" viewBox="0 0 16 16"><rect x="2" y="1.5" width="12" height="9" fill="#ececec" stroke="#a4a4a4" stroke-width="1.3"/><path d="M4.5 4.500h6M4.5 7h4.500" stroke="#9a9a9a" stroke-width="1"/><path d="M6.500 11h3v2h-3zM4 13.800h8" stroke="#a4a4a4" stroke-width="1.500" fill="#a4a4a4"/></svg>
<svg style="left:1222.3px;top:477.4px;" width="16" height="16" viewBox="0 0 16 16"><path d="M4.500 6.500h7l-3.500 3.800z" fill="#7a7a7a"/></svg>
<svg style="left:1242.5px;top:478px;" width="16" height="16" viewBox="0 0 16 16"><rect x="1.5" y="3.5" width="12" height="10.5" fill="#fbfae6" stroke="#7b8fb3" stroke-width=".9"/><path d="M1.5 4.600h12" stroke="#3a76c4" stroke-width="2.200"/><path d="M12.500 0l1 2.300 2.400.200-1.800 1.600.6 2.400-2.200-1.300-2.200 1.300.6-2.400-1.800-1.600 2.400-.200z" fill="#f8d24a" stroke="#c99a1c" stroke-width=".5"/></svg>
<svg style="left:1260.3px;top:477.4px;" width="16" height="16" viewBox="0 0 16 16"><path d="M4.500 6.500h7l-3.500 3.800z" fill="#1a1a1a"/></svg>
<svg style="left:1279px;top:477px;" width="16" height="16" viewBox="0 0 16 16"><rect x="3.500" y="4.500" width="9" height="3" fill="#fff" stroke="#555" stroke-width="1"/></svg>
<svg style="left:1302px;top:477px;" width="16" height="16" viewBox="0 0 16 16"><rect x="3.500" y="4.500" width="9" height="9" fill="#fff" stroke="#555" stroke-width="1"/><path d="M3.500 5.500h9" stroke="#555" stroke-width="1"/></svg>
<span class="t" style='left:6.3px;top:500.80px;font-size:12px;line-height:16px;color:#000;font-family:"Liberation Sans", sans-serif;letter-spacing:-0.021px;'>No consoles to display at this time.</span>
<div style="left:6px;top:516px;width:1321px;height:1px;background:#8c8c8c;"></div>
<div style="left:782px;top:704px;width:1px;height:20px;background:#b4b8c8;"></div>
<div style="left:887px;top:704px;width:1px;height:20px;background:#b4b8c8;"></div>
<div style="left:985px;top:704px;width:1px;height:20px;background:#b4b8c8;"></div>
<div style="left:1081.5px;top:712px;width:1.5px;height:1.5px;background:#8a90a4;"></div>
<div style="left:1081.5px;top:717px;width:1.5px;height:1.5px;background:#8a90a4;"></div>
<div style="left:1081.5px;top:722px;width:1.5px;height:1.5px;background:#8a90a4;"></div>
<span class="t" style='left:791px;top:704.50px;font-size:12px;line-height:16px;color:#222;font-family:"Liberation Sans", sans-serif;'>Writable</span>
<span class="t" style='left:894px;top:704.50px;font-size:12px;line-height:16px;color:#222;font-family:"Liberation Sans", sans-serif;'>Smart Insert</span>
<span class="t" style='left:997px;top:704.50px;font-size:12px;line-height:16px;color:#222;font-family:"Liberation Sans", sans-serif;'>1 : 1</span>
<div style="left:0px;top:728px;width:1366px;height:40px;background:#101010;"></div>
<div style="left:342.5px;top:728px;width:50.3px;height:40px;background:#2b2b2b;"></div>
<div style="left:151.7px;top:765.5px;width:40px;height:2.5px;background:#85b9e6;"></div>
<div style="left:250px;top:765.5px;width:40.4px;height:2.5px;background:#85b9e6;"></div>
<div style="left:344px;top:765.5px;width:48px;height:2.5px;background:#85b9e6;"></div>
<svg style="left:15.6px;top:740px" width="16.4" height="16.2" viewBox="0 0 16.4 16.2"><path d="M0 2.300l6.700-.900v6.300h-6.700zM7.500 1.300l8.900-1.300v7.700h-8.900zM0 8.500h6.700v6.300l-6.700-.900zM7.500 8.500h8.900v7.700l-8.900-1.300z" fill="#fff"/></svg>
<svg style="left:61.5px;top:741px" width="20.5" height="14" viewBox="0 0 20.5 14"><rect x="4" y="1" width="12.500" height="12" fill="none" stroke="#fff" stroke-width="1.300"/><path d="M2.500 2.500h-2v9h2M18 2.500h2v9h-2" fill="none" stroke="#fff" stroke-width="1.200"/></svg>
<svg style="left:112.5px;top:737px" width="20.5" height="22" viewBox="0 0 20.5 22"><path d="M1 10.500q1-8.500 9.500-9.500 9 0 9.500 10.500v2h-13q.500 4.500 5.500 4.500 3.500 0 6.500-1.800v4.300q-3.500 1.800-7.500 1.500-7.500-.800-8-8 .300-4.500 4.500-6.500-2 2-2.300 4.500h8.300q0-4.500-4.500-4.800-5 .200-8.500 3.300z" fill="#1e88e5"/></svg>
<svg style="left:160.7px;top:737.5px" width="22.5" height="20.5" viewBox="0 0 22.5 20.5"><path d="M1 3q0-1 1-1h6l1.500 2h11.500q1 0 1 1v3h-21z" fill="#e9b83c"/><path d="M0 6.500h22.500v13q0 1-1 1h-20.500q-1 0-1-1z" fill="#fbdc72"/><path d="M4 13h14.500v7.500h-3.500v-4h-7.500v4h-3.500z" fill="#3f9be0"/><path d="M6 11.500h10.500v2h-10.500z" fill="#5fb2ee"/></svg>
<svg style="left:210px;top:735.5px" width="21" height="23.5" viewBox="0 0 21 23.5"><path d="M6.500 6q0-5.500 4-5.500t4 5.500" fill="none" stroke="#fff" stroke-width="1.400"/><path d="M0 6.500l21-1.500v18l-21-2z" fill="#fff"/><path d="M4.500 10.500l5-.500v4.500h-5zM10.500 9.900l6-.600v5.200h-6zM4.500 15.500h5v4.500l-5-.500zM10.500 15.500h6v5.300l-6-.700z" fill="#101010"/></svg>
<svg style="left:258.5px;top:736.5px" width="23" height="23" viewBox="0 0 23 23"><circle cx="11.500" cy="11.500" r="11.300" fill="#e24a3b"/><path d="M11.500 11.500l-9.800-5.600a11.300 11.300 0 0 0 5.200 15.900z" fill="#2da94f"/><path d="M11.500 11.500l-4.600 10.300a11.300 11.300 0 0 0 15.700-12.800h-11z" fill="#fdd03b"/><path d="M1.700 5.900l5.300 8.800 4.500-3.200z" fill="#2da94f"/><circle cx="11.500" cy="11.500" r="5.300" fill="#f4f4f4"/><circle cx="11.500" cy="11.500" r="4.200" fill="#4a8af4"/></svg>
<svg style="left:306.5px;top:736.5px" width="24.5" height="23" viewBox="0 0 24.5 23"><circle cx="11" cy="11.500" r="11" fill="#e8962e"/><circle cx="13" cy="11.500" r="10.500" fill="#101010"/><circle cx="14" cy="11.500" r="10.300" fill="#2c2255"/><path d="M4 8h20M3.700 10.600h20.600M3.800 13.200h20.400" stroke="#f4f4fa" stroke-width="1.500"/></svg>
<svg style="left:356px;top:736px" width="24" height="24" viewBox="0 0 24 24"><rect x="0" y="0" width="24" height="24" fill="#4a3388"/><path d="M12 1.500l1.500 2.300 2.500-1.300.800 2.600 2.800-.400-.200 2.800 2.800.500-1.100 2.500 2.400 1.500-1.800 2 1.800 2-2.400 1.500 1.100 2.500h-2.800l-.600 2.200h-13.600l-.600-2.200h-2.800l1.100-2.500-2.400-1.500 1.800-2-1.800-2 2.400-1.500-1.100-2.500 2.800-.500-.200-2.800 2.800.400.800-2.600 2.500 1.300z" fill="#e9e9ee"/><circle cx="12" cy="12.500" r="7.300" fill="#2a2140"/><text x="1.200" y="11.300" font-family="Liberation Sans,sans-serif" font-weight="bold" font-size="6.200" fill="#f09a28" textLength="21.500" lengthAdjust="spacingAndGlyphs">Java EE</text><text x="6" y="17.800" font-family="Liberation Sans,sans-serif" font-weight="bold" font-size="6.800" fill="#f09a28" textLength="12" lengthAdjust="spacingAndGlyphs">IDE</text></svg>
<svg style="left:1177px;top:744.5px" width="12.4" height="8" viewBox="0 0 12.4 8"><path d="M.700 7l5.500-5.500 5.500 5.500" fill="none" stroke="#fff" stroke-width="1.200"/></svg>
<svg style="left:1199.4px;top:740.2px" width="15.6" height="15.6" viewBox="0 0 16 16"><rect width="16" height="16" fill="#d8111b"/><path d="M2.500 11.500q1-7.500 6.500-7.500 3.500 0 4 3-4.500 0-7 3.500M8.500 4.500q.500 6.500 3.500 6.500 1 0 1.600-1" fill="none" stroke="#fff" stroke-width="1.500" stroke-linecap="round"/></svg>
<svg style="left:1223px;top:742.5px" width="16" height="11" viewBox="0 0 16 11"><rect x="4.500" y="2" width="10" height="7" fill="none" stroke="#fff" stroke-width="1.200"/><path d="M15 4v3" stroke="#fff" stroke-width="1.300"/><path d="M1.300 .500v2.500M3.700 .500v2.500" stroke="#fff" stroke-width="1"/><path d="M.500 3h4v2.500q-.500 1.500-2 1.500t-2-1.500zM2.500 7v3" stroke="#fff" stroke-width="1" fill="#fff"/><path d="M2.500 9.500h3" stroke="#fff" stroke-width="1"/></svg>
<svg style="left:1250px;top:742.5px" width="13" height="13" viewBox="0 0 13 13"><circle cx="10.500" cy="11" r="1.300" fill="#fff"/><path d="M6.500 11a4 4 0 0 1 4-4" fill="none" stroke="#fff" stroke-width="1.200"/><path d="M3.500 11a7 7 0 0 1 7-7" fill="none" stroke="#bbb" stroke-width="1.200"/><path d="M.600 11a10 10 0 0 1 10-10" fill="none" stroke="#999" stroke-width="1.200"/></svg>
<svg style="left:1270.8px;top:741.8px" width="16.5" height="13" viewBox="0 0 16.5 13"><path d="M.600 4.500h3l3.500-3.500v11l-3.500-3.500h-3z" fill="none" stroke="#fff" stroke-width="1.100" stroke-linejoin="round"/><path d="M9 4.500q1.500 2 0 4M11 3q2.500 3.500 0 7" fill="none" stroke="#fff" stroke-width="1.100"/><path d="M13.300 1.500q3.500 5 0 10" fill="none" stroke="#888" stroke-width="1"/></svg>
<span class="t" style='left:1313px;top:730.60px;font-size:12px;line-height:16px;color:#fff;font-family:"Liberation Sans", sans-serif;letter-spacing:-0.846px;'>15:28</span>
<span class="t" style='left:1298.5px;top:748.30px;font-size:12px;line-height:16px;color:#fff;font-family:"Liberation Sans", sans-serif;letter-spacing:-0.456px;'>18/01/2017</span>
<div style="left:1361.5px;top:728px;width:1px;height:40px;background:#555;"></div>
<div style="left:540px;top:229px;width:595px;height:486px;background:#f0f0f0;box-shadow:0 2px 20px rgba(0,0,0,0.33),0 0 3px rgba(70,140,210,0.5);outline:1px solid #3573ae;outline-offset:-1px;">
<div style="left:1px;top:1px;width:593px;height:30px;background:#fff;"></div>
<div style="left:6px;top:152px;width:583px;height:328px;background:#fff;border:1px solid #adadad;box-sizing:border-box;"></div>
<div style="left:571px;top:153px;width:17px;height:326px;background:#f0f0f0;"></div>
<div style="left:385px;top:110px;width:90px;height:23px;background:#e5f1fb;border:1px solid #0078d7;box-sizing:border-box;"></div>
<div style="left:482px;top:110px;width:90px;height:23px;background:#e1e1e1;border:2px solid #0078d7;box-sizing:border-box;"></div>
</div>
<svg style="left:549px;top:237px;" width="16" height="16" viewBox="0 0 16 16"><rect x="0" y="0" width="16" height="16" rx=".8" fill="#2c2255"/><circle cx="8" cy="8" r="6.300" fill="none" stroke="#f4f4f8" stroke-width="2.300" stroke-dasharray="1.650 1.650"/><circle cx="8" cy="8" r="5.300" fill="#f4f4f8"/><circle cx="8" cy="8" r="4.300" fill="#37305f"/><path d="M4 6.800h8M3.800 8h8.400M4 9.200h8" stroke="#5d578c" stroke-width=".6"/></svg>
<svg style="left:1010px;top:235px" width="115" height="20" viewBox="0 0 115 20"><path d="M5 9.500h10" stroke="#111" stroke-width="1"/><path d="M50.500 4.500h9v9h-9z" fill="none" stroke="#111" stroke-width="1"/><path d="M96 4.500l10 10M106 4.500l-10 10" stroke="#111" stroke-width="1"/></svg>
<svg style="left:555.5px;top:274.5px" width="33" height="33" viewBox="0 0 32 32"><circle cx="16" cy="16" r="15.400" fill="#ececec" stroke="#b5b5b5" stroke-width="1"/><circle cx="16" cy="16" r="13" fill="url(#gR)" stroke="#8c1014" stroke-width="1"/><ellipse cx="16" cy="9.500" rx="9.500" ry="5.500" fill="#fff" opacity=".22"/><path d="M9.800 9.800l12.400 12.400M22.200 9.800l-12.400 12.400" stroke="#b0b0b0" stroke-width="5.400" stroke-linecap="round" opacity=".35"/><path d="M10 10l12 12M22 10l-12 12" stroke="#fff" stroke-width="4.200" stroke-linecap="round"/></svg>
<svg style="left:1110.5px;top:383.5px;" width="16" height="16" viewBox="0 0 16 16"><path d="M4.500 10l3.500-3.700 3.500 3.700" fill="none" stroke="#bcbcbc" stroke-width="1.700"/></svg>
<svg style="left:1110.5px;top:690.8px;" width="16" height="16" viewBox="0 0 16 16"><path d="M4.500 6l3.500 3.700 3.500-3.700" fill="none" stroke="#bcbcbc" stroke-width="1.700"/></svg>
<span class="t" style='left:570px;top:236.40px;font-size:12px;line-height:16px;color:#000;font-family:"Liberation Sans", sans-serif;letter-spacing:-0.055px;'>Problem Occurred</span>
<span class="t" style='left:598.4px;top:275.00px;font-size:12px;line-height:16px;color:#000;font-family:"Liberation Sans", sans-serif;letter-spacing:-0.040px;'>&#x27;Building Workspace&#x27; has encountered a problem.</span>
<span class="t" style='left:598.4px;top:299.60px;font-size:12px;line-height:16px;color:#000;font-family:"Liberation Sans", sans-serif;letter-spacing:-0.025px;'>Errors occurred during the build.</span>
<span class="t" style='left:961.5px;top:343.20px;font-size:12px;line-height:16px;color:#000;font-family:"Liberation Sans", sans-serif;letter-spacing:-0.172px;'>OK</span>
<span class="t" style='left:1040px;top:343.20px;font-size:12px;line-height:16px;color:#000;font-family:"Liberation Sans", sans-serif;letter-spacing:-0.003px;'>&lt;&lt; Details</span>
<span class="t" style='left:548px;top:383.20px;font-size:12px;line-height:16px;color:#000;font-family:"Liberation Sans", sans-serif;letter-spacing:-0.022px;'>Errors occurred during the build.</span>
<span class="t" style='left:570px;top:398.20px;font-size:12px;line-height:16px;color:#000;font-family:"Liberation Sans", sans-serif;letter-spacing:-0.007px;'>Errors running builder &#x27;Maven Project Builder&#x27; on project &#x27;servico&#x27;.</span>
<span class="t" style='left:585px;top:413.20px;font-size:12px;line-height:16px;color:#000;font-family:"Liberation Sans", sans-serif;letter-spacing:0.006px;'>Could not calculate build plan: Plugin org.apache.maven.plugins:maven-resources-plugin:2.6 or</span>
<span class="t" style='left:578.6px;top:428.20px;font-size:12px;line-height:16px;color:#000;font-family:"Liberation Sans", sans-serif;letter-spacing:-0.056px;'>one of its dependencies could not be resolved: Failed to read artifact descriptor for</span>
<span class="t" style='left:578.6px;top:443.20px;font-size:12px;line-height:16px;color:#000;font-family:"Liberation Sans", sans-serif;letter-spacing:-0.060px;'>org.apache.maven.plugins:maven-resources-plugin:jar:2.6</span>
<span class="t" style='left:585px;top:458.20px;font-size:12px;line-height:16px;color:#000;font-family:"Liberation Sans", sans-serif;letter-spacing:-0.021px;'>Plugin org.apache.maven.plugins:maven-resources-plugin:2.6 or one of its dependencies could not</span>
<span class="t" style='left:578.6px;top:473.20px;font-size:12px;line-height:16px;color:#000;font-family:"Liberation Sans", sans-serif;letter-spacing:-0.096px;'>be resolved: Failed to read artifact descriptor for</span>
<span class="t" style='left:578.6px;top:488.20px;font-size:12px;line-height:16px;color:#000;font-family:"Liberation Sans", sans-serif;letter-spacing:-0.060px;'>org.apache.maven.plugins:maven-resources-plugin:jar:2.6</span>
<span class="t" style='left:570px;top:503.20px;font-size:12px;line-height:16px;color:#000;font-family:"Liberation Sans", sans-serif;letter-spacing:-0.003px;'>Could not calculate build plan: Plugin org.apache.maven.plugins:maven-resources-plugin:2.6 or one</span>
<span class="t" style='left:563.3px;top:518.20px;font-size:12px;line-height:16px;color:#000;font-family:"Liberation Sans", sans-serif;letter-spacing:-0.053px;'>of its dependencies could not be resolved: Failed to read artifact descriptor for</span>
<span class="t" style='left:563.3px;top:533.20px;font-size:12px;line-height:16px;color:#000;font-family:"Liberation Sans", sans-serif;letter-spacing:-0.062px;'>org.apache.maven.plugins:maven-resources-plugin:jar:2.6</span>
<span class="t" style='left:570px;top:548.20px;font-size:12px;line-height:16px;color:#000;font-family:"Liberation Sans", sans-serif;letter-spacing:-0.015px;'>Plugin org.apache.maven.plugins:maven-resources-plugin:2.6 or one of its dependencies could not</span>
<span class="t" style='left:563.3px;top:563.20px;font-size:12px;line-height:16px;color:#000;font-family:"Liberation Sans", sans-serif;letter-spacing:-0.088px;'>be resolved: Failed to read artifact descriptor for</span>
<span class="t" style='left:563.3px;top:578.20px;font-size:12px;line-height:16px;color:#000;font-family:"Liberation Sans", sans-serif;letter-spacing:-0.062px;'>org.apache.maven.plugins:maven-resources-plugin:jar:2.6</span>
</div>
</body>
</html>
